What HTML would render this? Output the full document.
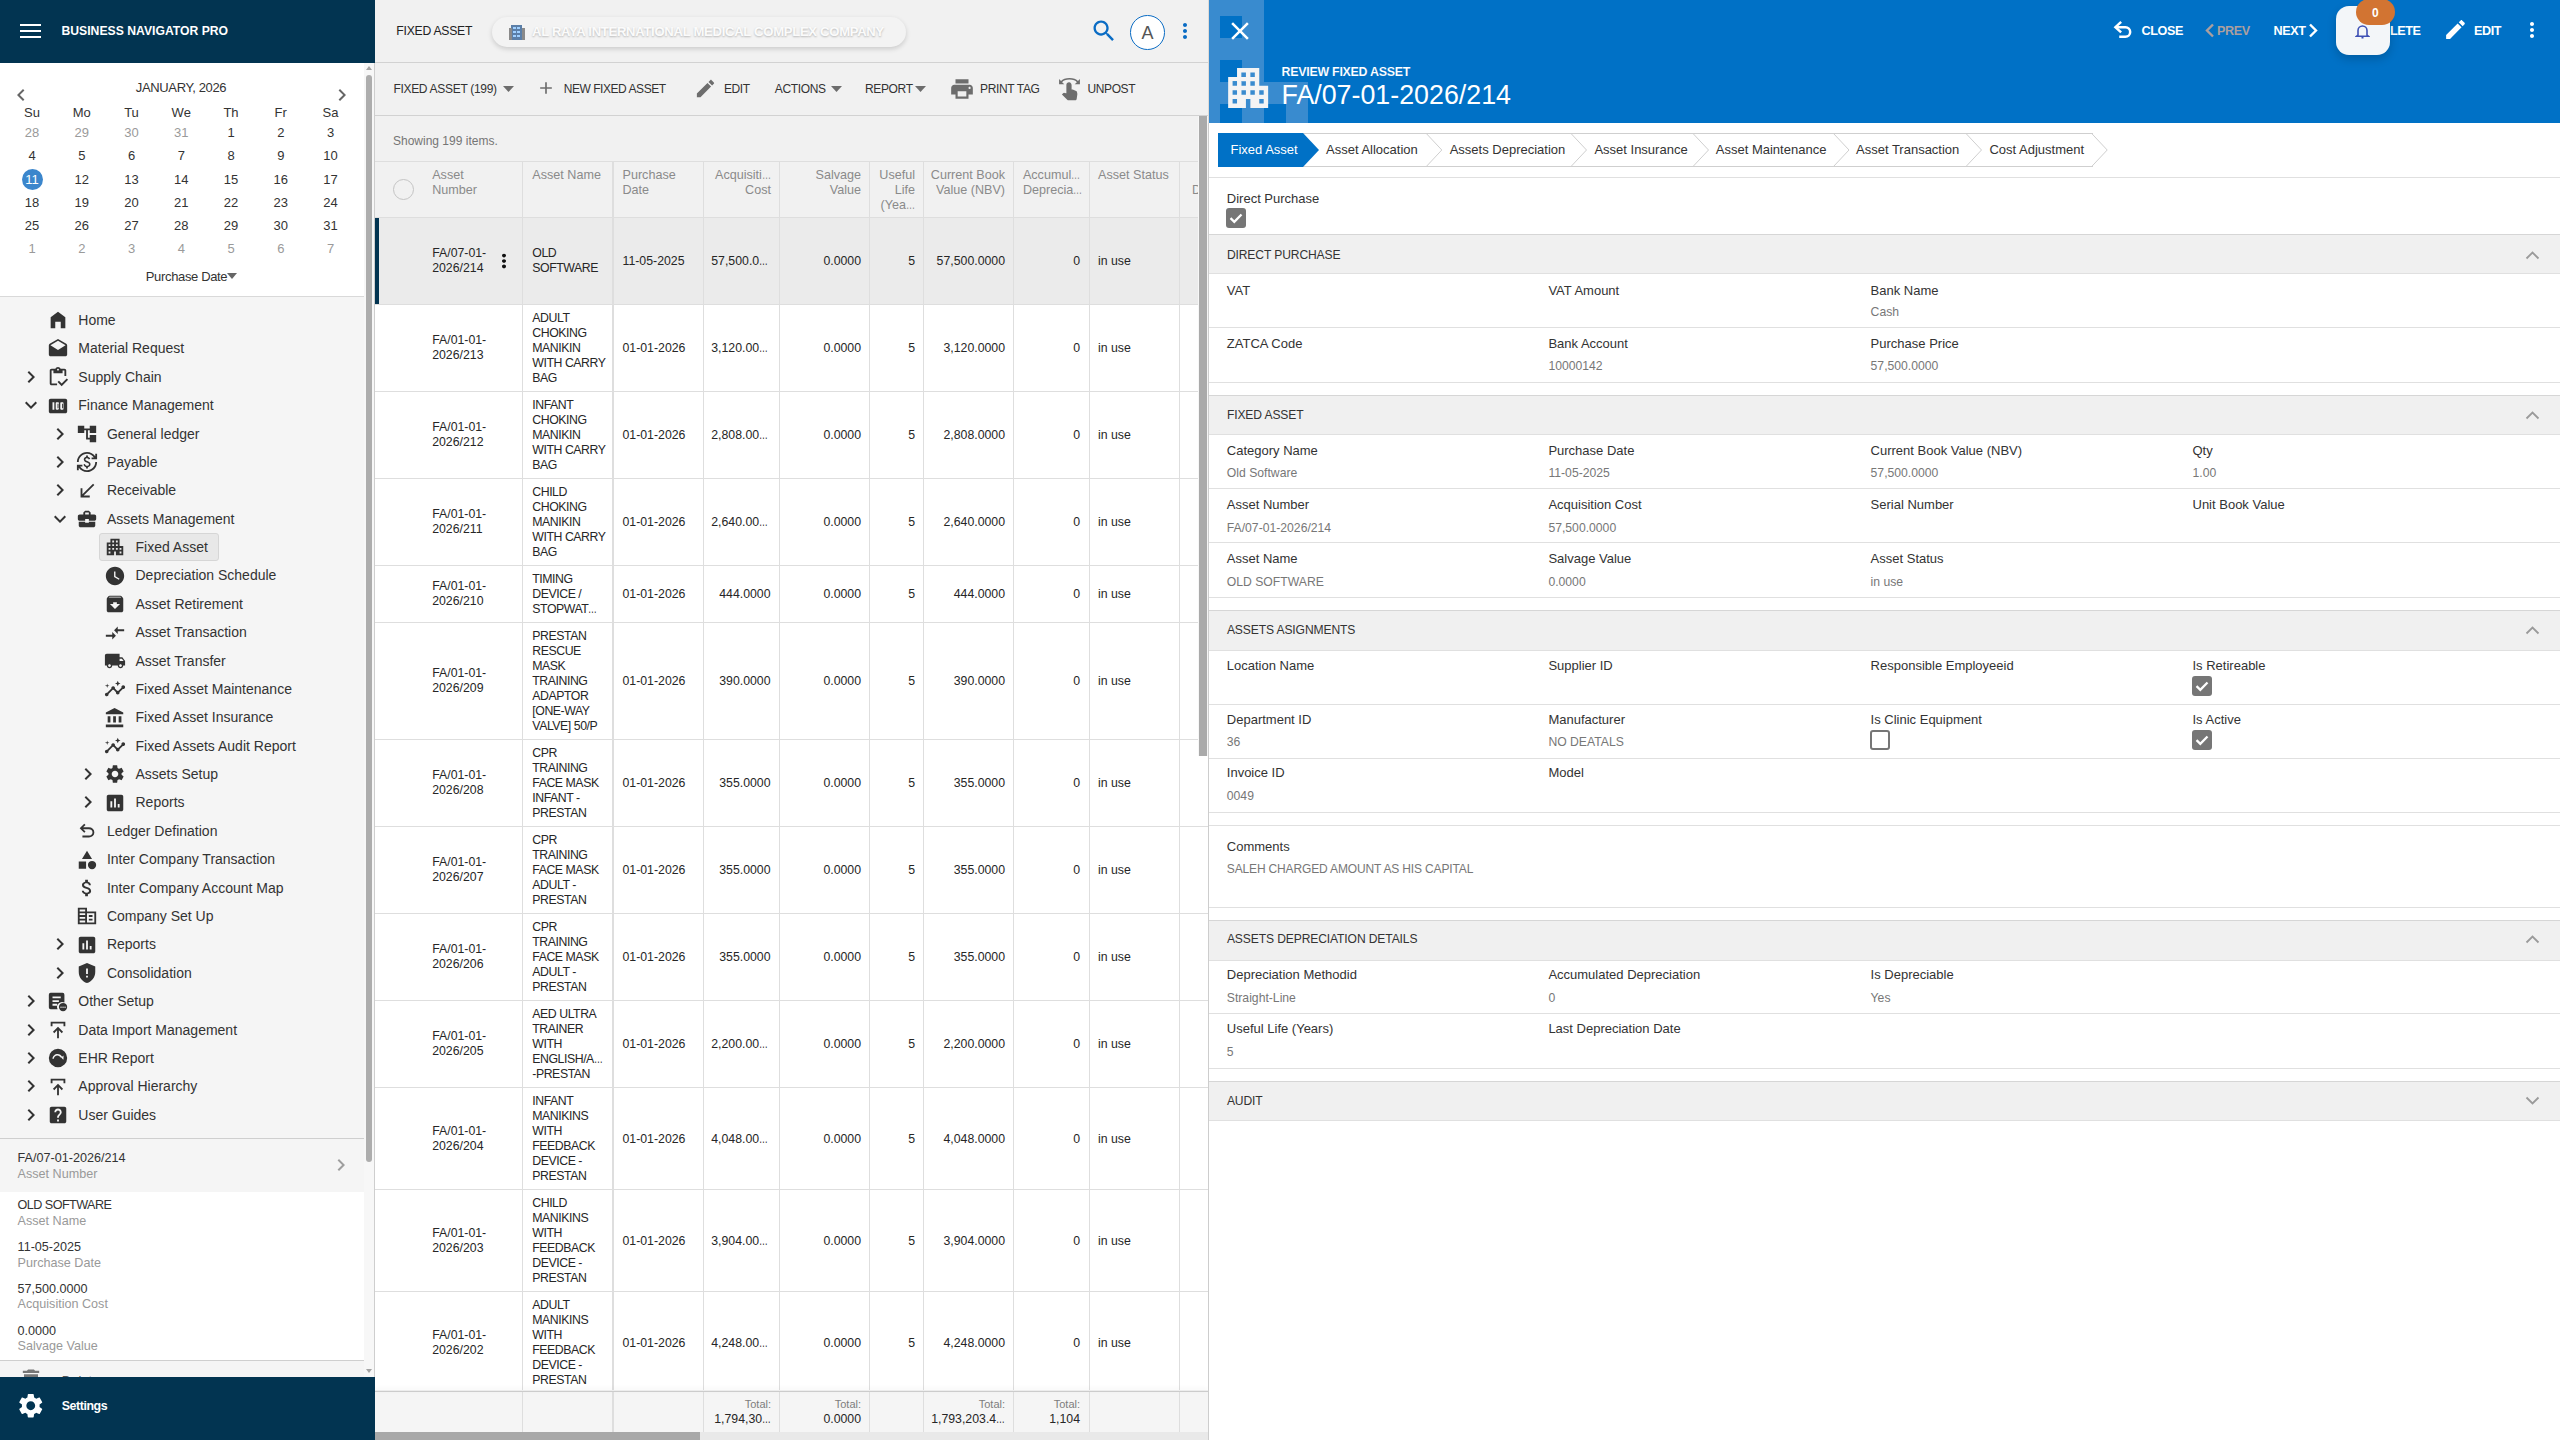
<!DOCTYPE html>
<html><head><meta charset="utf-8"><title>Fixed Asset</title>
<style>
html,body{margin:0;padding:0;}
body{width:2560px;height:1440px;overflow:hidden;position:relative;font-family:"Liberation Sans", sans-serif;background:#fff;}
.t{position:absolute;white-space:nowrap;}
.r{position:absolute;}
.i{position:absolute;display:block;}
.el{display:inline-block;transform:scaleX(0.72);transform-origin:0 50%;margin-right:-0.28em;}
</style></head><body>
<div class="r" style="left:0px;top:0px;width:375px;height:1440px;background:#f5f5f5;"></div>
<div class="r" style="left:0px;top:0px;width:375px;height:63px;background:#023451;"></div>
<div class="r" style="left:20px;top:24px;width:21px;height:2.3px;background:#fff"></div>
<div class="r" style="left:20px;top:30px;width:21px;height:2.3px;background:#fff"></div>
<div class="r" style="left:20px;top:35.6px;width:21px;height:2.3px;background:#fff"></div>
<div class="t" style="top:20.50px;font-size:12.2px;line-height:20px;color:#fff;font-weight:bold;left:61.50px;">BUSINESS NAVIGATOR PRO</div>
<div class="r" style="left:0px;top:63px;width:364px;height:233px;background:#fff;"></div>
<div class="r" style="left:0px;top:296px;width:364px;height:1px;background:#d9d9d9;"></div>
<div class="t" style="top:77.70px;font-size:13px;line-height:20px;color:#333;letter-spacing:-0.35px;left:81.00px;width:200px;text-align:center;">JANUARY, 2026</div>
<svg class="i" style="left:9px;top:83px;width:24px;height:24px;" viewBox="0 0 24 24"><path fill="#666" d="M15.41 7.41L14 6l-6 6 6 6 1.41-1.41L10.83 12z"/></svg>
<svg class="i" style="left:330px;top:83px;width:24px;height:24px;" viewBox="0 0 24 24"><path fill="#666" d="M10 6L8.59 7.41 13.17 12l-4.58 4.59L10 18l6-6z"/></svg>
<div class="t" style="top:102.50px;font-size:13px;line-height:20px;color:#333;left:12.00px;width:40px;text-align:center;">Su</div>
<div class="t" style="top:102.50px;font-size:13px;line-height:20px;color:#333;left:61.75px;width:40px;text-align:center;">Mo</div>
<div class="t" style="top:102.50px;font-size:13px;line-height:20px;color:#333;left:111.50px;width:40px;text-align:center;">Tu</div>
<div class="t" style="top:102.50px;font-size:13px;line-height:20px;color:#333;left:161.25px;width:40px;text-align:center;">We</div>
<div class="t" style="top:102.50px;font-size:13px;line-height:20px;color:#333;left:211.00px;width:40px;text-align:center;">Th</div>
<div class="t" style="top:102.50px;font-size:13px;line-height:20px;color:#333;left:260.75px;width:40px;text-align:center;">Fr</div>
<div class="t" style="top:102.50px;font-size:13px;line-height:20px;color:#333;left:310.50px;width:40px;text-align:center;">Sa</div>
<div class="t" style="top:122.50px;font-size:13px;line-height:20px;color:#9a9a9a;left:12.00px;width:40px;text-align:center;">28</div>
<div class="t" style="top:122.50px;font-size:13px;line-height:20px;color:#9a9a9a;left:61.75px;width:40px;text-align:center;">29</div>
<div class="t" style="top:122.50px;font-size:13px;line-height:20px;color:#9a9a9a;left:111.50px;width:40px;text-align:center;">30</div>
<div class="t" style="top:122.50px;font-size:13px;line-height:20px;color:#9a9a9a;left:161.25px;width:40px;text-align:center;">31</div>
<div class="t" style="top:122.50px;font-size:13px;line-height:20px;color:#333;left:211.00px;width:40px;text-align:center;">1</div>
<div class="t" style="top:122.50px;font-size:13px;line-height:20px;color:#333;left:260.75px;width:40px;text-align:center;">2</div>
<div class="t" style="top:122.50px;font-size:13px;line-height:20px;color:#333;left:310.50px;width:40px;text-align:center;">3</div>
<div class="t" style="top:146.40px;font-size:13px;line-height:20px;color:#333;left:12.00px;width:40px;text-align:center;">4</div>
<div class="t" style="top:146.40px;font-size:13px;line-height:20px;color:#333;left:61.75px;width:40px;text-align:center;">5</div>
<div class="t" style="top:146.40px;font-size:13px;line-height:20px;color:#333;left:111.50px;width:40px;text-align:center;">6</div>
<div class="t" style="top:146.40px;font-size:13px;line-height:20px;color:#333;left:161.25px;width:40px;text-align:center;">7</div>
<div class="t" style="top:146.40px;font-size:13px;line-height:20px;color:#333;left:211.00px;width:40px;text-align:center;">8</div>
<div class="t" style="top:146.40px;font-size:13px;line-height:20px;color:#333;left:260.75px;width:40px;text-align:center;">9</div>
<div class="t" style="top:146.40px;font-size:13px;line-height:20px;color:#333;left:310.50px;width:40px;text-align:center;">10</div>
<div class="r" style="left:21.5px;top:169.0px;width:21px;height:21px;border-radius:50%;background:#3b86cc"></div>
<div class="t" style="top:169.50px;font-size:13px;line-height:20px;color:#fff;left:12.00px;width:40px;text-align:center;">11</div>
<div class="t" style="top:169.50px;font-size:13px;line-height:20px;color:#333;left:61.75px;width:40px;text-align:center;">12</div>
<div class="t" style="top:169.50px;font-size:13px;line-height:20px;color:#333;left:111.50px;width:40px;text-align:center;">13</div>
<div class="t" style="top:169.50px;font-size:13px;line-height:20px;color:#333;left:161.25px;width:40px;text-align:center;">14</div>
<div class="t" style="top:169.50px;font-size:13px;line-height:20px;color:#333;left:211.00px;width:40px;text-align:center;">15</div>
<div class="t" style="top:169.50px;font-size:13px;line-height:20px;color:#333;left:260.75px;width:40px;text-align:center;">16</div>
<div class="t" style="top:169.50px;font-size:13px;line-height:20px;color:#333;left:310.50px;width:40px;text-align:center;">17</div>
<div class="t" style="top:192.60px;font-size:13px;line-height:20px;color:#333;left:12.00px;width:40px;text-align:center;">18</div>
<div class="t" style="top:192.60px;font-size:13px;line-height:20px;color:#333;left:61.75px;width:40px;text-align:center;">19</div>
<div class="t" style="top:192.60px;font-size:13px;line-height:20px;color:#333;left:111.50px;width:40px;text-align:center;">20</div>
<div class="t" style="top:192.60px;font-size:13px;line-height:20px;color:#333;left:161.25px;width:40px;text-align:center;">21</div>
<div class="t" style="top:192.60px;font-size:13px;line-height:20px;color:#333;left:211.00px;width:40px;text-align:center;">22</div>
<div class="t" style="top:192.60px;font-size:13px;line-height:20px;color:#333;left:260.75px;width:40px;text-align:center;">23</div>
<div class="t" style="top:192.60px;font-size:13px;line-height:20px;color:#333;left:310.50px;width:40px;text-align:center;">24</div>
<div class="t" style="top:216.30px;font-size:13px;line-height:20px;color:#333;left:12.00px;width:40px;text-align:center;">25</div>
<div class="t" style="top:216.30px;font-size:13px;line-height:20px;color:#333;left:61.75px;width:40px;text-align:center;">26</div>
<div class="t" style="top:216.30px;font-size:13px;line-height:20px;color:#333;left:111.50px;width:40px;text-align:center;">27</div>
<div class="t" style="top:216.30px;font-size:13px;line-height:20px;color:#333;left:161.25px;width:40px;text-align:center;">28</div>
<div class="t" style="top:216.30px;font-size:13px;line-height:20px;color:#333;left:211.00px;width:40px;text-align:center;">29</div>
<div class="t" style="top:216.30px;font-size:13px;line-height:20px;color:#333;left:260.75px;width:40px;text-align:center;">30</div>
<div class="t" style="top:216.30px;font-size:13px;line-height:20px;color:#333;left:310.50px;width:40px;text-align:center;">31</div>
<div class="t" style="top:239.40px;font-size:13px;line-height:20px;color:#9a9a9a;left:12.00px;width:40px;text-align:center;">1</div>
<div class="t" style="top:239.40px;font-size:13px;line-height:20px;color:#9a9a9a;left:61.75px;width:40px;text-align:center;">2</div>
<div class="t" style="top:239.40px;font-size:13px;line-height:20px;color:#9a9a9a;left:111.50px;width:40px;text-align:center;">3</div>
<div class="t" style="top:239.40px;font-size:13px;line-height:20px;color:#9a9a9a;left:161.25px;width:40px;text-align:center;">4</div>
<div class="t" style="top:239.40px;font-size:13px;line-height:20px;color:#9a9a9a;left:211.00px;width:40px;text-align:center;">5</div>
<div class="t" style="top:239.40px;font-size:13px;line-height:20px;color:#9a9a9a;left:260.75px;width:40px;text-align:center;">6</div>
<div class="t" style="top:239.40px;font-size:13px;line-height:20px;color:#9a9a9a;left:310.50px;width:40px;text-align:center;">7</div>
<div class="t" style="top:266.60px;font-size:13px;line-height:20px;color:#333;letter-spacing:-0.35px;left:145.80px;">Purchase Date</div>
<svg class="i" style="left:226.5px;top:273px;width:10px;height:6px;" viewBox="0 0 10 6"><path d="M0 0h10L5 6z" fill="#666"/></svg>
<svg class="i" style="left:47.0px;top:309.4px;width:22px;height:22px;" viewBox="0 0 24 24"><path fill="#333" d="M12 3L4 9v12h5v-7h6v7h5V9z"/></svg>
<div class="t" style="top:310.00px;font-size:14px;line-height:20px;color:#333;left:78.30px;">Home</div>
<svg class="i" style="left:47.0px;top:337.78px;width:22px;height:22px;" viewBox="0 0 24 24"><path fill="#333" d="M21.99 8c0-.72-.37-1.35-.94-1.7L12 1 2.95 6.3C2.38 6.65 2 7.28 2 8v10c0 1.1.9 2 2 2h16c1.1 0 2-.9 2-2l-.01-10zM12 13L3.74 7.84 12 3l8.26 4.84L12 13z"/></svg>
<div class="t" style="top:338.38px;font-size:14px;line-height:20px;color:#333;left:78.30px;">Material Request</div>
<svg class="i" style="left:19.0px;top:364.76px;width:24px;height:24px;" viewBox="0 0 24 24"><path fill="#333" d="M10 6L8.59 7.41 13.17 12l-4.58 4.59L10 18l6-6z"/></svg>
<svg class="i" style="left:47.0px;top:366.15999999999997px;width:22px;height:22px;" viewBox="0 0 24 24"><path fill="#333" d="M19 3h-4.18C14.4 1.84 13.3 1 12 1s-2.4.84-2.82 2H5c-1.1 0-2 .9-2 2v14c0 1.1.9 2 2 2h6v-2H5V5h2v3h10V5h2v6h2V5c0-1.1-.9-2-2-2zm-7 2c-.55 0-1-.45-1-1s.45-1 1-1 1 .45 1 1-.45 1-1 1zm9.5 8.5L16 19l-3-3-1.5 1.5L16 22l7-7z"/></svg>
<div class="t" style="top:366.76px;font-size:14px;line-height:20px;color:#333;left:78.30px;">Supply Chain</div>
<svg class="i" style="left:19.0px;top:393.14px;width:24px;height:24px;" viewBox="0 0 24 24"><path fill="#333" d="M16.59 8.59L12 13.17 7.41 8.59 6 10l6 6 6-6z"/></svg>
<svg class="i" style="left:47.0px;top:394.53999999999996px;width:22px;height:22px;" viewBox="0 0 24 24"><path fill="#333" d="M20 4H4c-1.11 0-2 .89-2 2v12c0 1.11.89 2 2 2h16c1.11 0 2-.89 2-2V6c0-1.11-.89-2-2-2zM8 16H6V8h2v8zm5-1c0 .55-.45 1-1 1h-1.5c-.55 0-1-.45-1-1V9c0-.55.45-1 1-1H12c.55 0 1 .45 1 1v6zm5 0c0 .55-.45 1-1 1h-1.5c-.55 0-1-.45-1-1V9c0-.55.45-1 1-1H17c.55 0 1 .45 1 1v6zm-6.5-5.5h1v5h-1zm5 0h1v5h-1z"/></svg>
<div class="t" style="top:395.14px;font-size:14px;line-height:20px;color:#333;left:78.30px;">Finance Management</div>
<svg class="i" style="left:47.6px;top:421.52px;width:24px;height:24px;" viewBox="0 0 24 24"><path fill="#333" d="M10 6L8.59 7.41 13.17 12l-4.58 4.59L10 18l6-6z"/></svg>
<svg class="i" style="left:75.6px;top:422.91999999999996px;width:22px;height:22px;" viewBox="0 0 24 24"><path fill="#333" d="M22 11V3h-7v3H9V3H2v8h7V8h2v10h4v3h7v-8h-7v3h-2V8h2v3z"/></svg>
<div class="t" style="top:423.52px;font-size:14px;line-height:20px;color:#333;left:106.90px;">General ledger</div>
<svg class="i" style="left:47.6px;top:449.9px;width:24px;height:24px;" viewBox="0 0 24 24"><path fill="#333" d="M10 6L8.59 7.41 13.17 12l-4.58 4.59L10 18l6-6z"/></svg>
<svg class="i" style="left:75.6px;top:451.29999999999995px;width:22px;height:22px;" viewBox="0 0 24 24"><path fill="#333" d="M12.89 11.1c-1.78-.59-2.64-.96-2.64-1.9 0-1.02 1.11-1.39 1.81-1.39 1.31 0 1.79.99 1.9 1.34l1.58-.67c-.15-.45-.82-1.92-2.54-2.24V5h-2v1.26c-2.48.56-2.49 2.86-2.49 2.96 0 2.27 2.25 2.91 3.35 3.31 1.58.56 2.28 1.07 2.28 2.03 0 1.13-1.05 1.61-1.98 1.61-1.82 0-2.34-1.87-2.4-2.09l-1.66.67c.63 2.19 2.28 2.78 2.9 2.96V19h2v-1.24c.4-.09 2.9-.59 2.9-3.22 0-1.39-.61-2.61-3.01-3.44zM3 21H1v-6h6v2H4.52c1.61 2.41 4.36 4 7.48 4 4.97 0 9-4.03 9-9h2c0 6.08-4.92 11-11 11-3.72 0-7.01-1.85-9-4.67V21zm-2-9C1 5.92 5.92 1 12 1c3.72 0 7.01 1.85 9 4.67V3h2v6h-6V7h2.48C17.87 4.59 15.12 3 12 3c-4.97 0-9 4.03-9 9H1z"/></svg>
<div class="t" style="top:451.90px;font-size:14px;line-height:20px;color:#333;left:106.90px;">Payable</div>
<svg class="i" style="left:47.6px;top:478.28px;width:24px;height:24px;" viewBox="0 0 24 24"><path fill="#333" d="M10 6L8.59 7.41 13.17 12l-4.58 4.59L10 18l6-6z"/></svg>
<svg class="i" style="left:75.6px;top:479.67999999999995px;width:22px;height:22px;" viewBox="0 0 24 24"><path fill="#333" d="M15 19v-2H8.41L20 5.41 18.59 4 7 15.59V9H5v10h10z"/></svg>
<div class="t" style="top:480.28px;font-size:14px;line-height:20px;color:#333;left:106.90px;">Receivable</div>
<svg class="i" style="left:47.6px;top:506.65999999999997px;width:24px;height:24px;" viewBox="0 0 24 24"><path fill="#333" d="M16.59 8.59L12 13.17 7.41 8.59 6 10l6 6 6-6z"/></svg>
<svg class="i" style="left:75.6px;top:508.05999999999995px;width:22px;height:22px;" viewBox="0 0 24 24"><path fill="#333" d="M10 16v-1H3.01L3 19c0 1.11.89 2 2 2h14c1.11 0 2-.89 2-2v-4h-7v1h-4zm10-9h-4.01V5l-2-2h-4l-2 2v2H4c-1.1 0-2 .9-2 2v3c0 1.11.89 2 2 2h6v-2h4v2h6c1.1 0 2-.9 2-2V9c0-1.1-.9-2-2-2zm-6 0h-4V5h4v2z"/></svg>
<div class="t" style="top:508.66px;font-size:14px;line-height:20px;color:#333;left:106.90px;">Assets Management</div>
<div class="r" style="left:99px;top:533px;width:120px;height:28px;background:#e8e8e8;border:1px solid #d6d6d6;border-radius:3px;box-sizing:border-box"></div>
<svg class="i" style="left:104.2px;top:536.4399999999999px;width:22px;height:22px;" viewBox="0 0 24 24"><path fill="#333" d="M17 11V3H7v4H3v14h8v-4h2v4h8V11h-4zM7 19H5v-2h2v2zm0-4H5v-2h2v2zm0-4H5V9h2v2zm4 4H9v-2h2v2zm0-4H9V9h2v2zm0-4H9V5h2v2zm4 8h-2v-2h2v2zm0-4h-2V9h2v2zm0-4h-2V5h2v2zm4 12h-2v-2h2v2zm0-4h-2v-2h2v2z"/></svg>
<div class="t" style="top:537.04px;font-size:14px;line-height:20px;color:#333;left:135.50px;">Fixed Asset</div>
<svg class="i" style="left:104.2px;top:564.8199999999999px;width:22px;height:22px;" viewBox="0 0 24 24"><path fill="#333" d="M12 2C6.5 2 2 6.5 2 12s4.5 10 10 10 10-4.5 10-10S17.5 2 12 2zm4.2 14.2L11 13V7h1.5v5.2l4.5 2.7-.8 1.3z"/></svg>
<div class="t" style="top:565.42px;font-size:14px;line-height:20px;color:#333;left:135.50px;">Depreciation Schedule</div>
<svg class="i" style="left:104.2px;top:593.1999999999999px;width:22px;height:22px;" viewBox="0 0 24 24"><path fill="#333" d="M20.54 5.23l-1.39-1.68C18.88 3.21 18.47 3 18 3H6c-.47 0-.88.21-1.16.55L3.46 5.23C3.17 5.57 3 6.02 3 6.5V19c0 1.1.9 2 2 2h14c1.1 0 2-.9 2-2V6.5c0-.48-.17-.93-.46-1.27zM12 17.5L6.5 12H10v-2h4v2h3.5L12 17.5zM5.12 5l.81-1h12l.94 1H5.12z"/></svg>
<div class="t" style="top:593.80px;font-size:14px;line-height:20px;color:#333;left:135.50px;">Asset Retirement</div>
<svg class="i" style="left:104.2px;top:621.58px;width:22px;height:22px;" viewBox="0 0 24 24"><path fill="#333" d="M9.01 14H2v2h7.01v3L13 15l-3.99-4v3zm5.98-1v-3H22V8h-7.01V5L11 9l3.99 4z"/></svg>
<div class="t" style="top:622.18px;font-size:14px;line-height:20px;color:#333;left:135.50px;">Asset Transaction</div>
<svg class="i" style="left:104.2px;top:649.9599999999999px;width:22px;height:22px;" viewBox="0 0 24 24"><path fill="#333" d="M20 8h-3V4H3c-1.1 0-2 .9-2 2v11h2c0 1.66 1.34 3 3 3s3-1.34 3-3h6c0 1.66 1.34 3 3 3s3-1.34 3-3h2v-5l-3-4zM6 18.5c-.83 0-1.5-.67-1.5-1.5s.67-1.5 1.5-1.5 1.5.67 1.5 1.5-.67 1.5-1.5 1.5zm13.5-9l1.96 2.5H17V9.5h2.5zm-1.5 9c-.83 0-1.5-.67-1.5-1.5s.67-1.5 1.5-1.5 1.5.67 1.5 1.5-.67 1.5-1.5 1.5z"/></svg>
<div class="t" style="top:650.56px;font-size:14px;line-height:20px;color:#333;left:135.50px;">Asset Transfer</div>
<svg class="i" style="left:104.2px;top:678.34px;width:22px;height:22px;" viewBox="0 0 24 24"><path fill="#333" d="M21 8c-1.45 0-2.26 1.44-1.93 2.51l-3.55 3.56c-.3-.09-.74-.09-1.04 0l-2.55-2.55C12.27 10.45 11.46 9 10 9c-1.45 0-2.27 1.44-1.93 2.52l-4.56 4.55C2.44 15.74 1 16.55 1 18c0 1.1.9 2 2 2 1.45 0 2.26-1.44 1.93-2.51l4.55-4.56c.3.09.74.09 1.04 0l2.55 2.55C12.73 16.55 13.54 18 15 18c1.45 0 2.27-1.44 1.93-2.52l3.56-3.55c1.07.33 2.51-.48 2.51-1.93 0-1.1-.9-2-2-2zM15 9l.94-2.07L18 6l-2.06-.93L15 3l-.92 2.07L12 6l2.08.93zM3.5 11L4 9l2-.5L4 8l-.5-2L3 8l-2 .5L3 9z"/></svg>
<div class="t" style="top:678.94px;font-size:14px;line-height:20px;color:#333;left:135.50px;">Fixed Asset Maintenance</div>
<svg class="i" style="left:104.2px;top:706.7199999999999px;width:22px;height:22px;" viewBox="0 0 24 24"><path fill="#333" d="M4 10v7h3v-7H4zm6 0v7h3v-7h-3zM2 22h19v-3H2v3zm14-12v7h3v-7h-3zm-4.5-9L2 6v2h19V6l-9.5-5z"/></svg>
<div class="t" style="top:707.32px;font-size:14px;line-height:20px;color:#333;left:135.50px;">Fixed Asset Insurance</div>
<svg class="i" style="left:104.2px;top:735.1px;width:22px;height:22px;" viewBox="0 0 24 24"><path fill="#333" d="M21 8c-1.45 0-2.26 1.44-1.93 2.51l-3.55 3.56c-.3-.09-.74-.09-1.04 0l-2.55-2.55C12.27 10.45 11.46 9 10 9c-1.45 0-2.27 1.44-1.93 2.52l-4.56 4.55C2.44 15.74 1 16.55 1 18c0 1.1.9 2 2 2 1.45 0 2.26-1.44 1.93-2.51l4.55-4.56c.3.09.74.09 1.04 0l2.55 2.55C12.73 16.55 13.54 18 15 18c1.45 0 2.27-1.44 1.93-2.52l3.56-3.55c1.07.33 2.51-.48 2.51-1.93 0-1.1-.9-2-2-2zM15 9l.94-2.07L18 6l-2.06-.93L15 3l-.92 2.07L12 6l2.08.93zM3.5 11L4 9l2-.5L4 8l-.5-2L3 8l-2 .5L3 9z"/></svg>
<div class="t" style="top:735.70px;font-size:14px;line-height:20px;color:#333;left:135.50px;">Fixed Assets Audit Report</div>
<svg class="i" style="left:76.2px;top:762.0799999999999px;width:24px;height:24px;" viewBox="0 0 24 24"><path fill="#333" d="M10 6L8.59 7.41 13.17 12l-4.58 4.59L10 18l6-6z"/></svg>
<svg class="i" style="left:104.2px;top:763.4799999999999px;width:22px;height:22px;" viewBox="0 0 24 24"><path fill="#333" d="M19.14 12.94c.04-.3.06-.61.06-.94 0-.32-.02-.64-.07-.94l2.03-1.58c.18-.14.23-.41.12-.61l-1.92-3.32c-.12-.22-.37-.29-.59-.22l-2.39.96c-.5-.38-1.03-.7-1.62-.94l-.36-2.54c-.04-.24-.24-.41-.48-.41h-3.84c-.24 0-.43.17-.47.41l-.36 2.54c-.59.24-1.13.57-1.62.94l-2.39-.96c-.22-.08-.47 0-.59.22L2.74 8.87c-.12.21-.08.47.12.61l2.03 1.58c-.05.3-.09.63-.09.94s.02.64.07.94l-2.03 1.58c-.18.14-.23.41-.12.61l1.92 3.32c.12.22.37.29.59.22l2.39-.96c.5.38 1.03.7 1.62.94l.36 2.54c.05.24.24.41.48.41h3.84c.24 0 .44-.17.47-.41l.36-2.54c.59-.24 1.13-.56 1.62-.94l2.39.96c.22.08.47 0 .59-.22l1.92-3.32c.12-.22.07-.47-.12-.61l-2.01-1.58zM12 15.6c-1.98 0-3.6-1.62-3.6-3.6s1.62-3.6 3.6-3.6 3.6 1.62 3.6 3.6-1.62 3.6-3.6 3.6z"/></svg>
<div class="t" style="top:764.08px;font-size:14px;line-height:20px;color:#333;left:135.50px;">Assets Setup</div>
<svg class="i" style="left:76.2px;top:790.46px;width:24px;height:24px;" viewBox="0 0 24 24"><path fill="#333" d="M10 6L8.59 7.41 13.17 12l-4.58 4.59L10 18l6-6z"/></svg>
<svg class="i" style="left:104.2px;top:791.86px;width:22px;height:22px;" viewBox="0 0 24 24"><path fill="#333" d="M19 3H5c-1.1 0-2 .9-2 2v14c0 1.1.9 2 2 2h14c1.1 0 2-.9 2-2V5c0-1.1-.9-2-2-2zM9 17H7v-7h2v7zm4 0h-2V7h2v10zm4 0h-2v-4h2v4z"/></svg>
<div class="t" style="top:792.46px;font-size:14px;line-height:20px;color:#333;left:135.50px;">Reports</div>
<svg class="i" style="left:75.6px;top:820.2399999999999px;width:22px;height:22px;" viewBox="0 0 24 24"><path fill="#333" d="M7 19v-2h7.1q1.575 0 2.738-1T18 13.5Q18 12 16.837 11T14.1 10H7.8l2.6 2.6L9 14 4 9l5-5 1.4 1.4L7.8 8h6.3q2.425 0 4.163 1.575T20 13.5q0 2.35-1.737 3.925T14.1 19z"/></svg>
<div class="t" style="top:820.84px;font-size:14px;line-height:20px;color:#333;left:106.90px;">Ledger Defination</div>
<svg class="i" style="left:75.6px;top:848.62px;width:22px;height:22px;" viewBox="0 0 24 24"><path fill="#333" d="M12 2l-5.5 9h11zM17.5 13a4.5 4.5 0 1 0 0 9 4.5 4.5 0 0 0 0-9zM3 13.5h8v8H3z"/></svg>
<div class="t" style="top:849.22px;font-size:14px;line-height:20px;color:#333;left:106.90px;">Inter Company Transaction</div>
<svg class="i" style="left:75.6px;top:877.0px;width:22px;height:22px;" viewBox="0 0 24 24"><path fill="#333" d="M11.8 10.9c-2.27-.59-3-1.2-3-2.15 0-1.09 1.01-1.85 2.7-1.85 1.78 0 2.44.85 2.5 2.1h2.21c-.07-1.72-1.12-3.3-3.21-3.81V3h-3v2.16c-1.94.42-3.5 1.68-3.5 3.61 0 2.31 1.91 3.46 4.7 4.13 2.5.6 3 1.48 3 2.41 0 .69-.49 1.79-2.7 1.79-2.06 0-2.87-.92-2.98-2.1h-2.2c.12 2.19 1.76 3.42 3.68 3.83V21h3v-2.15c1.95-.37 3.5-1.5 3.5-3.55 0-2.84-2.43-3.81-4.7-4.4z"/></svg>
<div class="t" style="top:877.60px;font-size:14px;line-height:20px;color:#333;left:106.90px;">Inter Company Account Map</div>
<svg class="i" style="left:75.6px;top:905.38px;width:22px;height:22px;" viewBox="0 0 24 24"><path fill="#333" d="M12 7V3H2v18h20V7H12zm-2 12H4v-2h6v2zm0-4H4v-2h6v2zm0-4H4V9h6v2zm0-4H4V5h6v2zm10 12h-8V9h8v10zm-2-8h-4v2h4v-2zm0 4h-4v2h4v-2z"/></svg>
<div class="t" style="top:905.98px;font-size:14px;line-height:20px;color:#333;left:106.90px;">Company Set Up</div>
<svg class="i" style="left:47.6px;top:932.36px;width:24px;height:24px;" viewBox="0 0 24 24"><path fill="#333" d="M10 6L8.59 7.41 13.17 12l-4.58 4.59L10 18l6-6z"/></svg>
<svg class="i" style="left:75.6px;top:933.76px;width:22px;height:22px;" viewBox="0 0 24 24"><path fill="#333" d="M19 3H5c-1.1 0-2 .9-2 2v14c0 1.1.9 2 2 2h14c1.1 0 2-.9 2-2V5c0-1.1-.9-2-2-2zM9 17H7v-7h2v7zm4 0h-2V7h2v10zm4 0h-2v-4h2v4z"/></svg>
<div class="t" style="top:934.36px;font-size:14px;line-height:20px;color:#333;left:106.90px;">Reports</div>
<svg class="i" style="left:47.6px;top:960.74px;width:24px;height:24px;" viewBox="0 0 24 24"><path fill="#333" d="M10 6L8.59 7.41 13.17 12l-4.58 4.59L10 18l6-6z"/></svg>
<svg class="i" style="left:75.6px;top:962.14px;width:22px;height:22px;" viewBox="0 0 24 24"><path fill="#333" d="M12 1L3 5v6c0 5.55 3.84 10.74 9 12 5.16-1.26 9-6.45 9-12V5l-9-4zm1 16h-2v-2h2v2zm0-4h-2V7h2v6z"/></svg>
<div class="t" style="top:962.74px;font-size:14px;line-height:20px;color:#333;left:106.90px;">Consolidation</div>
<svg class="i" style="left:19.0px;top:989.12px;width:24px;height:24px;" viewBox="0 0 24 24"><path fill="#333" d="M10 6L8.59 7.41 13.17 12l-4.58 4.59L10 18l6-6z"/></svg>
<svg class="i" style="left:47.0px;top:990.52px;width:22px;height:22px;" viewBox="0 0 24 24"><path fill="#333" d="M4 2h13a2 2 0 0 1 2 2v8.6a5.5 5.5 0 0 0-7.4 7.4H4a2 2 0 0 1-2-2V4a2 2 0 0 1 2-2zm2 4v2h9V6zm0 4v2h7v-2zm0 4v2h5v-2zM17.5 13a4.5 4.5 0 1 1 0 9 4.5 4.5 0 0 1 0-9zm-2.2 3.8a.8.8 0 1 0 0 1.6.8.8 0 0 0 0-1.6zm2.2 0a.8.8 0 1 0 0 1.6.8.8 0 0 0 0-1.6zm2.2 0a.8.8 0 1 0 0 1.6.8.8 0 0 0 0-1.6z"/></svg>
<div class="t" style="top:991.12px;font-size:14px;line-height:20px;color:#333;left:78.30px;">Other Setup</div>
<svg class="i" style="left:19.0px;top:1017.5px;width:24px;height:24px;" viewBox="0 0 24 24"><path fill="#333" d="M10 6L8.59 7.41 13.17 12l-4.58 4.59L10 18l6-6z"/></svg>
<svg class="i" style="left:47.0px;top:1018.9px;width:22px;height:22px;" viewBox="0 0 24 24"><path fill="#333" d="M4 3h16v5h-2V5H6v3H4zM12 8.5l-5.5 5.5 1.41 1.41L11 12.33V21h2v-8.67l3.09 3.08L17.5 14z"/></svg>
<div class="t" style="top:1019.50px;font-size:14px;line-height:20px;color:#333;left:78.30px;">Data Import Management</div>
<svg class="i" style="left:19.0px;top:1045.88px;width:24px;height:24px;" viewBox="0 0 24 24"><path fill="#333" d="M10 6L8.59 7.41 13.17 12l-4.58 4.59L10 18l6-6z"/></svg>
<svg class="i" style="left:47.0px;top:1047.2800000000002px;width:22px;height:22px;" viewBox="0 0 24 24"><path fill="#333" d="M12 2a10 10 0 1 0 0 20 10 10 0 0 0 0-20zm5.5 11.5l-2.5-2.6V12c-.5-1.6-2-2.7-3.7-2.7-2 0-3.7 1.5-3.9 3.5H5.9c.3-3 2.7-5.3 5.6-5.3 2.2 0 4.1 1.3 5 3.2l1.5-1.5V13.5z"/></svg>
<div class="t" style="top:1047.88px;font-size:14px;line-height:20px;color:#333;left:78.30px;">EHR Report</div>
<svg class="i" style="left:19.0px;top:1074.26px;width:24px;height:24px;" viewBox="0 0 24 24"><path fill="#333" d="M10 6L8.59 7.41 13.17 12l-4.58 4.59L10 18l6-6z"/></svg>
<svg class="i" style="left:47.0px;top:1075.66px;width:22px;height:22px;" viewBox="0 0 24 24"><path fill="#333" d="M4 3h16v5h-2V5H6v3H4zM12 8.5l-5.5 5.5 1.41 1.41L11 12.33V21h2v-8.67l3.09 3.08L17.5 14z"/></svg>
<div class="t" style="top:1076.26px;font-size:14px;line-height:20px;color:#333;left:78.30px;">Approval Hierarchy</div>
<svg class="i" style="left:19.0px;top:1102.6399999999999px;width:24px;height:24px;" viewBox="0 0 24 24"><path fill="#333" d="M10 6L8.59 7.41 13.17 12l-4.58 4.59L10 18l6-6z"/></svg>
<svg class="i" style="left:47.0px;top:1104.04px;width:22px;height:22px;" viewBox="0 0 24 24"><path fill="#333" d="M19 3H5c-1.1 0-2 .9-2 2v14c0 1.1.9 2 2 2h14c1.1 0 2-.9 2-2V5c0-1.1-.9-2-2-2zm-6 16h-2v-2h2v2zm1.7-7.2l-.9.9c-.7.7-.8 1.3-.8 2.3h-2v-.5c0-1.1.4-2 1.2-2.8l1.2-1.2c.4-.4.6-.9.6-1.5 0-1.1-.9-2-2-2s-2 .9-2 2H8c0-2.2 1.8-4 4-4s4 1.8 4 4c0 .9-.4 1.7-1.3 2.8z"/></svg>
<div class="t" style="top:1104.64px;font-size:14px;line-height:20px;color:#333;left:78.30px;">User Guides</div>
<div class="r" style="left:0px;top:1138px;width:364px;height:1px;background:#cfcfcf;"></div>
<div class="r" style="left:0px;top:1139px;width:364px;height:53px;background:#f5f5f5;"></div>
<div class="t" style="top:1147.80px;font-size:12.6px;line-height:20px;color:#333;left:17.60px;">FA/07-01-2026/214</div>
<div class="t" style="top:1163.60px;font-size:12.6px;line-height:20px;color:#999;left:17.60px;">Asset Number</div>
<svg class="i" style="left:329px;top:1153px;width:24px;height:24px;" viewBox="0 0 24 24"><path fill="#9e9e9e" d="M10 6L8.59 7.41 13.17 12l-4.58 4.59L10 18l6-6z"/></svg>
<div class="r" style="left:0px;top:1192px;width:364px;height:168px;background:#fff;"></div>
<div class="t" style="top:1194.80px;font-size:12.6px;line-height:20px;color:#333;letter-spacing:-0.55px;left:17.60px;">OLD SOFTWARE</div>
<div class="t" style="top:1210.60px;font-size:12.6px;line-height:20px;color:#999;left:17.60px;">Asset Name</div>
<div class="t" style="top:1236.80px;font-size:12.6px;line-height:20px;color:#333;letter-spacing:0px;left:17.60px;">11-05-2025</div>
<div class="t" style="top:1252.60px;font-size:12.6px;line-height:20px;color:#999;left:17.60px;">Purchase Date</div>
<div class="t" style="top:1278.60px;font-size:12.6px;line-height:20px;color:#333;letter-spacing:0px;left:17.60px;">57,500.0000</div>
<div class="t" style="top:1294.40px;font-size:12.6px;line-height:20px;color:#999;left:17.60px;">Acquisition Cost</div>
<div class="t" style="top:1320.50px;font-size:12.6px;line-height:20px;color:#333;letter-spacing:0px;left:17.60px;">0.0000</div>
<div class="t" style="top:1336.30px;font-size:12.6px;line-height:20px;color:#999;left:17.60px;">Salvage Value</div>
<div class="r" style="left:0px;top:1360px;width:364px;height:1px;background:#cfcfcf;"></div>
<svg class="i" style="left:16.7px;top:1365.5px;width:28px;height:28px;" viewBox="0 0 24 24"><path fill="#777" d="M6 19c0 1.1.9 2 2 2h8c1.1 0 2-.9 2-2V7H6v12zM19 4h-3.5l-1-1h-5l-1 1H5v2h14V4z"/></svg>
<div class="t" style="top:1371.00px;font-size:13px;line-height:20px;color:#555;left:61.80px;">Delete</div>
<div class="r" style="left:364px;top:63px;width:10px;height:1314px;background:#f7f7f7;"></div>
<div class="r" style="left:374px;top:63px;width:1px;height:1314px;background:#cecece;"></div>
<svg class="i" style="left:366px;top:66px;width:6px;height:4px;" viewBox="0 0 6 4"><path d="M0 4L3 0L6 4z" fill="#a3a3a3"/></svg>
<div class="r" style="left:366px;top:75px;width:6.1px;height:1087px;background:#adadad;border-radius:3px"></div>
<svg class="i" style="left:366px;top:1369px;width:6px;height:4px;" viewBox="0 0 6 4"><path d="M0 0L3 4L6 0z" fill="#a3a3a3"/></svg>
<div class="r" style="left:0px;top:1377px;width:375px;height:63px;background:#023451;"></div>
<svg class="i" style="left:16px;top:1391px;width:29.5px;height:29.5px;" viewBox="0 0 24 24"><path fill="#fff" d="M19.14 12.94c.04-.3.06-.61.06-.94 0-.32-.02-.64-.07-.94l2.03-1.58c.18-.14.23-.41.12-.61l-1.92-3.32c-.12-.22-.37-.29-.59-.22l-2.39.96c-.5-.38-1.03-.7-1.62-.94l-.36-2.54c-.04-.24-.24-.41-.48-.41h-3.84c-.24 0-.43.17-.47.41l-.36 2.54c-.59.24-1.13.57-1.62.94l-2.39-.96c-.22-.08-.47 0-.59.22L2.74 8.87c-.12.21-.08.47.12.61l2.03 1.58c-.05.3-.09.63-.09.94s.02.64.07.94l-2.03 1.58c-.18.14-.23.41-.12.61l1.92 3.32c.12.22.37.29.59.22l2.39-.96c.5.38 1.03.7 1.62.94l.36 2.54c.05.24.24.41.48.41h3.84c.24 0 .44-.17.47-.41l.36-2.54c.59-.24 1.13-.56 1.62-.94l2.39.96c.22.08.47 0 .59-.22l1.92-3.32c.12-.22.07-.47-.12-.61l-2.01-1.58zM12 15.6c-1.98 0-3.6-1.62-3.6-3.6s1.62-3.6 3.6-3.6 3.6 1.62 3.6 3.6-1.62 3.6-3.6 3.6z"/></svg>
<div class="t" style="top:1395.50px;font-size:12.4px;line-height:20px;color:#fff;font-weight:bold;letter-spacing:-0.45px;left:61.80px;">Settings</div>
<div class="r" style="left:375px;top:0px;width:833px;height:1440px;background:#f1f1f1;"></div>
<div class="r" style="left:375px;top:62px;width:833px;height:1px;background:#d2d2d2;"></div>
<div class="t" style="top:20.60px;font-size:12.2px;line-height:20px;color:#222;letter-spacing:-0.25px;left:396.30px;">FIXED ASSET</div>
<div class="r" style="left:492px;top:17px;width:414px;height:30px;border-radius:15px;background:#f3f3f3;box-shadow:0 2px 5px rgba(0,0,0,0.16)"></div>
<svg class="i" style="left:509px;top:24px;width:16px;height:17px;" viewBox="0 0 16 17"><rect x="2" y="1" width="11" height="15" fill="#5b7fa8"/><rect x="0" y="4" width="3" height="12" fill="#8a8a8a"/><rect x="13" y="4" width="3" height="12" fill="#8a8a8a"/><rect x="4" y="3" width="3" height="2" fill="#9fd0ff"/><rect x="8" y="3" width="3" height="2" fill="#9fd0ff"/><rect x="4" y="7" width="3" height="2" fill="#9fd0ff"/><rect x="8" y="7" width="3" height="2" fill="#9fd0ff"/><rect x="4" y="11" width="3" height="2" fill="#9fd0ff"/><rect x="8" y="11" width="3" height="2" fill="#9fd0ff"/></svg>
<div class="t" style="top:22.40px;font-size:13.1px;line-height:20px;color:#fbfbfb;font-weight:bold;letter-spacing:-0.3px;left:532.00px;text-shadow:0 1px 2px rgba(0,0,0,0.25);">AL RAYA INTERNATIONAL MEDICAL COMPLEX COMPANY</div>
<svg class="i" style="left:1090px;top:16.8px;width:28px;height:28px;" viewBox="0 0 24 24"><path fill="#0a6cc4" d="M15.5 14h-.79l-.28-.27C15.41 12.59 16 11.11 16 9.5 16 5.91 13.09 3 9.5 3S3 5.91 3 9.5 5.91 16 9.5 16c1.61 0 3.09-.59 4.23-1.57l.27.28v.79l5 4.99L20.49 19l-4.99-5zm-6 0C7.01 14 5 11.99 5 9.5S7.01 5 9.5 5 14 7.01 14 9.5 11.99 14 9.5 14z"/></svg>
<div class="r" style="left:1130px;top:15px;width:34.7px;height:34.7px;border-radius:50%;background:#fff;border:1.5px solid #0a6cc4;box-sizing:border-box"></div>
<div class="t" style="top:22.50px;font-size:18px;line-height:20px;color:#555;left:1132.40px;width:30px;text-align:center;">A</div>
<svg class="i" style="left:1173px;top:19px;width:24px;height:24px;" viewBox="0 0 24 24"><path fill="#0a6cc4" d="M12 8c1.1 0 2-.9 2-2s-.9-2-2-2-2 .9-2 2 .9 2 2 2zm0 2c-1.1 0-2 .9-2 2s.9 2 2 2 2-.9 2-2-.9-2-2-2zm0 6c-1.1 0-2 .9-2 2s.9 2 2 2 2-.9 2-2-.9-2-2-2z"/></svg>
<div class="r" style="left:375px;top:115px;width:833px;height:1px;background:#d2d2d2;"></div>
<div class="t" style="top:78.50px;font-size:12px;line-height:20px;color:#333;letter-spacing:-0.3px;left:393.40px;">FIXED ASSET (199)</div>
<svg class="i" style="left:503px;top:86px;width:11px;height:6px;" viewBox="0 0 11 6"><path d="M0 0h11L5.5 6z" fill="#6d6d6d"/></svg>
<svg class="i" style="left:536px;top:78px;width:20px;height:20px;" viewBox="0 0 24 24"><path fill="#6d6d6d" d="M19 13h-6v6h-2v-6H5v-2h6V5h2v6h6v2z"/></svg>
<div class="t" style="top:78.50px;font-size:12px;line-height:20px;color:#333;letter-spacing:-0.45px;left:563.70px;">NEW FIXED ASSET</div>
<svg class="i" style="left:694px;top:77px;width:23px;height:23px;" viewBox="0 0 24 24"><path fill="#6d6d6d" d="M3 17.25V21h3.75L17.81 9.94l-3.75-3.75L3 17.25zM20.71 7.04c.39-.39.39-1.02 0-1.41l-2.34-2.34c-.39-.39-1.02-.39-1.41 0l-1.83 1.83 3.75 3.75 1.83-1.83z"/></svg>
<div class="t" style="top:78.50px;font-size:12px;line-height:20px;color:#333;letter-spacing:-0.4px;left:724.00px;">EDIT</div>
<div class="t" style="top:78.50px;font-size:12px;line-height:20px;color:#333;letter-spacing:-0.35px;left:774.80px;">ACTIONS</div>
<svg class="i" style="left:831px;top:86px;width:11px;height:6px;" viewBox="0 0 11 6"><path d="M0 0h11L5.5 6z" fill="#6d6d6d"/></svg>
<div class="t" style="top:78.50px;font-size:12px;line-height:20px;color:#333;letter-spacing:-0.35px;left:865.00px;">REPORT</div>
<svg class="i" style="left:915px;top:86px;width:11px;height:6px;" viewBox="0 0 11 6"><path d="M0 0h11L5.5 6z" fill="#6d6d6d"/></svg>
<svg class="i" style="left:949px;top:76px;width:26px;height:26px;" viewBox="0 0 24 24"><path fill="#6d6d6d" d="M19 8H5c-1.66 0-3 1.34-3 3v6h4v4h12v-4h4v-6c0-1.66-1.34-3-3-3zm-3 11H8v-5h8v5zm3-7c-.55 0-1-.45-1-1s.45-1 1-1 1 .45 1 1-.45 1-1 1zm-1-9H6v4h12V3z"/></svg>
<div class="t" style="top:78.50px;font-size:12px;line-height:20px;color:#333;letter-spacing:-0.35px;left:980.00px;">PRINT TAG</div>
<svg class="i" style="left:1057px;top:77px;width:25px;height:25px;" viewBox="0 0 24 24"><path fill="#6d6d6d" d="M18.89 13.77l-3.8-1.67C14.96 12.04 14.81 12 14.65 12H14V7.63c0-1.32-.96-2.5-2.27-2.62C10.25 4.88 9 6.04 9 7.5v8.15l-1.79-.38c-.58-.12-1.16.1-1.55.52l-.95.96 5.09 5.08c.38.38.79.59 1.25.59h6.36c.75 0 1.38-.55 1.48-1.29l.64-4.47c.09-.7-.16-1.72-.64-2.89zM20.13 3.87C18.69 2.17 15.6 1 12 1S5.31 2.17 3.87 3.87L2 2v5h5L4.93 4.93c1-1.29 3.7-2.43 7.07-2.43s6.07 1.14 7.07 2.43L17 7h5V2z"/></svg>
<div class="t" style="top:78.50px;font-size:12px;line-height:20px;color:#333;letter-spacing:-0.4px;left:1087.50px;">UNPOST</div>
<div class="t" style="top:131.30px;font-size:12px;line-height:20px;color:#757575;left:393.00px;">Showing 199 items.</div>
<div class="r" style="left:375px;top:161px;width:833px;height:1px;background:#dedede;"></div>
<div class="r" style="left:375px;top:217px;width:833px;height:1px;background:#dedede;"></div>
<div class="r" style="left:393px;top:179px;width:21px;height:21px;border-radius:50%;border:1px solid #c4c4c4;box-sizing:border-box"></div>
<div class="t" style="top:167.80px;font-size:12.6px;line-height:15px;color:#8a8a8a;left:432.20px;">Asset</div>
<div class="t" style="top:183.10px;font-size:12.6px;line-height:15px;color:#8a8a8a;left:432.20px;">Number</div>
<div class="t" style="top:167.80px;font-size:12.6px;line-height:15px;color:#8a8a8a;left:532.30px;">Asset Name</div>
<div class="t" style="top:167.80px;font-size:12.6px;line-height:15px;color:#8a8a8a;left:622.50px;">Purchase</div>
<div class="t" style="top:183.10px;font-size:12.6px;line-height:15px;color:#8a8a8a;left:622.50px;">Date</div>
<div class="t" style="top:167.80px;font-size:12.6px;line-height:15px;color:#8a8a8a;left:651.00px;width:120px;text-align:right;">Acquisiti<span class="el">…</span></div>
<div class="t" style="top:183.10px;font-size:12.6px;line-height:15px;color:#8a8a8a;left:651.00px;width:120px;text-align:right;">Cost</div>
<div class="t" style="top:167.80px;font-size:12.6px;line-height:15px;color:#8a8a8a;left:741.00px;width:120px;text-align:right;">Salvage</div>
<div class="t" style="top:183.10px;font-size:12.6px;line-height:15px;color:#8a8a8a;left:741.00px;width:120px;text-align:right;">Value</div>
<div class="t" style="top:167.80px;font-size:12.6px;line-height:15px;color:#8a8a8a;left:795.00px;width:120px;text-align:right;">Useful</div>
<div class="t" style="top:183.10px;font-size:12.6px;line-height:15px;color:#8a8a8a;left:795.00px;width:120px;text-align:right;">Life</div>
<div class="t" style="top:198.40px;font-size:12.6px;line-height:15px;color:#8a8a8a;left:795.00px;width:120px;text-align:right;">(Yea<span class="el">…</span></div>
<div class="t" style="top:167.80px;font-size:12.6px;line-height:15px;color:#8a8a8a;left:885.00px;width:120px;text-align:right;">Current Book</div>
<div class="t" style="top:183.10px;font-size:12.6px;line-height:15px;color:#8a8a8a;left:885.00px;width:120px;text-align:right;">Value (NBV)</div>
<div class="t" style="top:167.80px;font-size:12.6px;line-height:15px;color:#8a8a8a;left:1022.90px;">Accumul<span class="el">…</span></div>
<div class="t" style="top:183.10px;font-size:12.6px;line-height:15px;color:#8a8a8a;left:1022.90px;">Deprecia<span class="el">…</span></div>
<div class="t" style="top:167.80px;font-size:12.6px;line-height:15px;color:#8a8a8a;left:1098.00px;">Asset Status</div>
<div class="t" style="top:167.80px;font-size:12.6px;line-height:15px;color:#8a8a8a;left:1192.00px;"></div>
<div class="t" style="top:183.10px;font-size:12.6px;line-height:15px;color:#8a8a8a;left:1192.00px;">D</div>
<div class="r" style="left:375px;top:218px;width:833px;height:1172px;overflow:hidden">
<div class="r" style="left:-375px;top:-218px;width:2560px;height:1440px">
<div class="r" style="left:375px;top:218px;width:833px;height:86px;background:#ebebeb;"></div>
<div class="r" style="left:375px;top:304px;width:833px;height:1px;background:#dedede;"></div>
<div class="t" style="top:246.30px;font-size:12.3px;line-height:15px;color:#262626;letter-spacing:0px;left:432.20px;">FA/07-01-</div>
<div class="t" style="top:261.30px;font-size:12.3px;line-height:15px;color:#262626;letter-spacing:0px;left:432.20px;">2026/214</div>
<div class="t" style="top:246.30px;font-size:12.3px;line-height:15px;color:#262626;letter-spacing:-0.45px;left:532.30px;">OLD</div>
<div class="t" style="top:261.30px;font-size:12.3px;line-height:15px;color:#262626;letter-spacing:-0.45px;left:532.30px;">SOFTWARE</div>
<div class="t" style="top:251.30px;font-size:12.3px;line-height:20px;color:#262626;left:622.50px;">11-05-2025</div>
<div class="t" style="top:251.30px;font-size:12.3px;line-height:20px;color:#262626;left:668.00px;width:100px;text-align:right;">57,500.0<span class="el">…</span></div>
<div class="t" style="top:251.30px;font-size:12.3px;line-height:20px;color:#262626;left:761.00px;width:100px;text-align:right;">0.0000</div>
<div class="t" style="top:251.30px;font-size:12.3px;line-height:20px;color:#262626;left:875.00px;width:40px;text-align:right;">5</div>
<div class="t" style="top:251.30px;font-size:12.3px;line-height:20px;color:#262626;left:905.00px;width:100px;text-align:right;">57,500.0000</div>
<div class="t" style="top:251.30px;font-size:12.3px;line-height:20px;color:#262626;left:1040.00px;width:40px;text-align:right;">0</div>
<div class="t" style="top:251.30px;font-size:12.3px;line-height:20px;color:#262626;left:1098.00px;">in use</div>
<div class="r" style="left:375px;top:218px;width:4px;height:86px;background:#023451;"></div>
<svg class="i" style="left:492px;top:249px;width:24px;height:24px;transform:scale(1,0.9);" viewBox="0 0 24 24"><path fill="#111" d="M12 8c1.1 0 2-.9 2-2s-.9-2-2-2-2 .9-2 2 .9 2 2 2zm0 2c-1.1 0-2 .9-2 2s.9 2 2 2 2-.9 2-2-.9-2-2-2zm0 6c-1.1 0-2 .9-2 2s.9 2 2 2 2-.9 2-2-.9-2-2-2z"/></svg>
<div class="r" style="left:375px;top:305px;width:833px;height:86px;background:#fff;"></div>
<div class="r" style="left:375px;top:391px;width:833px;height:1px;background:#dedede;"></div>
<div class="t" style="top:333.30px;font-size:12.3px;line-height:15px;color:#262626;letter-spacing:0px;left:432.20px;">FA/01-01-</div>
<div class="t" style="top:348.30px;font-size:12.3px;line-height:15px;color:#262626;letter-spacing:0px;left:432.20px;">2026/213</div>
<div class="t" style="top:310.80px;font-size:12.3px;line-height:15px;color:#262626;letter-spacing:-0.45px;left:532.30px;">ADULT</div>
<div class="t" style="top:325.80px;font-size:12.3px;line-height:15px;color:#262626;letter-spacing:-0.45px;left:532.30px;">CHOKING</div>
<div class="t" style="top:340.80px;font-size:12.3px;line-height:15px;color:#262626;letter-spacing:-0.45px;left:532.30px;">MANIKIN</div>
<div class="t" style="top:355.80px;font-size:12.3px;line-height:15px;color:#262626;letter-spacing:-0.45px;left:532.30px;">WITH CARRY</div>
<div class="t" style="top:370.80px;font-size:12.3px;line-height:15px;color:#262626;letter-spacing:-0.45px;left:532.30px;">BAG</div>
<div class="t" style="top:338.30px;font-size:12.3px;line-height:20px;color:#262626;left:622.50px;">01-01-2026</div>
<div class="t" style="top:338.30px;font-size:12.3px;line-height:20px;color:#262626;left:668.00px;width:100px;text-align:right;">3,120.00<span class="el">…</span></div>
<div class="t" style="top:338.30px;font-size:12.3px;line-height:20px;color:#262626;left:761.00px;width:100px;text-align:right;">0.0000</div>
<div class="t" style="top:338.30px;font-size:12.3px;line-height:20px;color:#262626;left:875.00px;width:40px;text-align:right;">5</div>
<div class="t" style="top:338.30px;font-size:12.3px;line-height:20px;color:#262626;left:905.00px;width:100px;text-align:right;">3,120.0000</div>
<div class="t" style="top:338.30px;font-size:12.3px;line-height:20px;color:#262626;left:1040.00px;width:40px;text-align:right;">0</div>
<div class="t" style="top:338.30px;font-size:12.3px;line-height:20px;color:#262626;left:1098.00px;">in use</div>
<div class="r" style="left:375px;top:392px;width:833px;height:86px;background:#fff;"></div>
<div class="r" style="left:375px;top:478px;width:833px;height:1px;background:#dedede;"></div>
<div class="t" style="top:420.30px;font-size:12.3px;line-height:15px;color:#262626;letter-spacing:0px;left:432.20px;">FA/01-01-</div>
<div class="t" style="top:435.30px;font-size:12.3px;line-height:15px;color:#262626;letter-spacing:0px;left:432.20px;">2026/212</div>
<div class="t" style="top:397.80px;font-size:12.3px;line-height:15px;color:#262626;letter-spacing:-0.45px;left:532.30px;">INFANT</div>
<div class="t" style="top:412.80px;font-size:12.3px;line-height:15px;color:#262626;letter-spacing:-0.45px;left:532.30px;">CHOKING</div>
<div class="t" style="top:427.80px;font-size:12.3px;line-height:15px;color:#262626;letter-spacing:-0.45px;left:532.30px;">MANIKIN</div>
<div class="t" style="top:442.80px;font-size:12.3px;line-height:15px;color:#262626;letter-spacing:-0.45px;left:532.30px;">WITH CARRY</div>
<div class="t" style="top:457.80px;font-size:12.3px;line-height:15px;color:#262626;letter-spacing:-0.45px;left:532.30px;">BAG</div>
<div class="t" style="top:425.30px;font-size:12.3px;line-height:20px;color:#262626;left:622.50px;">01-01-2026</div>
<div class="t" style="top:425.30px;font-size:12.3px;line-height:20px;color:#262626;left:668.00px;width:100px;text-align:right;">2,808.00<span class="el">…</span></div>
<div class="t" style="top:425.30px;font-size:12.3px;line-height:20px;color:#262626;left:761.00px;width:100px;text-align:right;">0.0000</div>
<div class="t" style="top:425.30px;font-size:12.3px;line-height:20px;color:#262626;left:875.00px;width:40px;text-align:right;">5</div>
<div class="t" style="top:425.30px;font-size:12.3px;line-height:20px;color:#262626;left:905.00px;width:100px;text-align:right;">2,808.0000</div>
<div class="t" style="top:425.30px;font-size:12.3px;line-height:20px;color:#262626;left:1040.00px;width:40px;text-align:right;">0</div>
<div class="t" style="top:425.30px;font-size:12.3px;line-height:20px;color:#262626;left:1098.00px;">in use</div>
<div class="r" style="left:375px;top:479px;width:833px;height:86px;background:#fff;"></div>
<div class="r" style="left:375px;top:565px;width:833px;height:1px;background:#dedede;"></div>
<div class="t" style="top:507.30px;font-size:12.3px;line-height:15px;color:#262626;letter-spacing:0px;left:432.20px;">FA/01-01-</div>
<div class="t" style="top:522.30px;font-size:12.3px;line-height:15px;color:#262626;letter-spacing:0px;left:432.20px;">2026/211</div>
<div class="t" style="top:484.80px;font-size:12.3px;line-height:15px;color:#262626;letter-spacing:-0.45px;left:532.30px;">CHILD</div>
<div class="t" style="top:499.80px;font-size:12.3px;line-height:15px;color:#262626;letter-spacing:-0.45px;left:532.30px;">CHOKING</div>
<div class="t" style="top:514.80px;font-size:12.3px;line-height:15px;color:#262626;letter-spacing:-0.45px;left:532.30px;">MANIKIN</div>
<div class="t" style="top:529.80px;font-size:12.3px;line-height:15px;color:#262626;letter-spacing:-0.45px;left:532.30px;">WITH CARRY</div>
<div class="t" style="top:544.80px;font-size:12.3px;line-height:15px;color:#262626;letter-spacing:-0.45px;left:532.30px;">BAG</div>
<div class="t" style="top:512.30px;font-size:12.3px;line-height:20px;color:#262626;left:622.50px;">01-01-2026</div>
<div class="t" style="top:512.30px;font-size:12.3px;line-height:20px;color:#262626;left:668.00px;width:100px;text-align:right;">2,640.00<span class="el">…</span></div>
<div class="t" style="top:512.30px;font-size:12.3px;line-height:20px;color:#262626;left:761.00px;width:100px;text-align:right;">0.0000</div>
<div class="t" style="top:512.30px;font-size:12.3px;line-height:20px;color:#262626;left:875.00px;width:40px;text-align:right;">5</div>
<div class="t" style="top:512.30px;font-size:12.3px;line-height:20px;color:#262626;left:905.00px;width:100px;text-align:right;">2,640.0000</div>
<div class="t" style="top:512.30px;font-size:12.3px;line-height:20px;color:#262626;left:1040.00px;width:40px;text-align:right;">0</div>
<div class="t" style="top:512.30px;font-size:12.3px;line-height:20px;color:#262626;left:1098.00px;">in use</div>
<div class="r" style="left:375px;top:566px;width:833px;height:56px;background:#fff;"></div>
<div class="r" style="left:375px;top:622px;width:833px;height:1px;background:#dedede;"></div>
<div class="t" style="top:579.30px;font-size:12.3px;line-height:15px;color:#262626;letter-spacing:0px;left:432.20px;">FA/01-01-</div>
<div class="t" style="top:594.30px;font-size:12.3px;line-height:15px;color:#262626;letter-spacing:0px;left:432.20px;">2026/210</div>
<div class="t" style="top:571.80px;font-size:12.3px;line-height:15px;color:#262626;letter-spacing:-0.45px;left:532.30px;">TIMING</div>
<div class="t" style="top:586.80px;font-size:12.3px;line-height:15px;color:#262626;letter-spacing:-0.45px;left:532.30px;">DEVICE /</div>
<div class="t" style="top:601.80px;font-size:12.3px;line-height:15px;color:#262626;letter-spacing:-0.45px;left:532.30px;">STOPWAT<span class="el">…</span></div>
<div class="t" style="top:584.30px;font-size:12.3px;line-height:20px;color:#262626;left:622.50px;">01-01-2026</div>
<div class="t" style="top:584.30px;font-size:12.3px;line-height:20px;color:#262626;left:670.50px;width:100px;text-align:right;">444.0000</div>
<div class="t" style="top:584.30px;font-size:12.3px;line-height:20px;color:#262626;left:761.00px;width:100px;text-align:right;">0.0000</div>
<div class="t" style="top:584.30px;font-size:12.3px;line-height:20px;color:#262626;left:875.00px;width:40px;text-align:right;">5</div>
<div class="t" style="top:584.30px;font-size:12.3px;line-height:20px;color:#262626;left:905.00px;width:100px;text-align:right;">444.0000</div>
<div class="t" style="top:584.30px;font-size:12.3px;line-height:20px;color:#262626;left:1040.00px;width:40px;text-align:right;">0</div>
<div class="t" style="top:584.30px;font-size:12.3px;line-height:20px;color:#262626;left:1098.00px;">in use</div>
<div class="r" style="left:375px;top:623px;width:833px;height:116px;background:#fff;"></div>
<div class="r" style="left:375px;top:739px;width:833px;height:1px;background:#dedede;"></div>
<div class="t" style="top:666.30px;font-size:12.3px;line-height:15px;color:#262626;letter-spacing:0px;left:432.20px;">FA/01-01-</div>
<div class="t" style="top:681.30px;font-size:12.3px;line-height:15px;color:#262626;letter-spacing:0px;left:432.20px;">2026/209</div>
<div class="t" style="top:628.80px;font-size:12.3px;line-height:15px;color:#262626;letter-spacing:-0.45px;left:532.30px;">PRESTAN</div>
<div class="t" style="top:643.80px;font-size:12.3px;line-height:15px;color:#262626;letter-spacing:-0.45px;left:532.30px;">RESCUE</div>
<div class="t" style="top:658.80px;font-size:12.3px;line-height:15px;color:#262626;letter-spacing:-0.45px;left:532.30px;">MASK</div>
<div class="t" style="top:673.80px;font-size:12.3px;line-height:15px;color:#262626;letter-spacing:-0.45px;left:532.30px;">TRAINING</div>
<div class="t" style="top:688.80px;font-size:12.3px;line-height:15px;color:#262626;letter-spacing:-0.45px;left:532.30px;">ADAPTOR</div>
<div class="t" style="top:703.80px;font-size:12.3px;line-height:15px;color:#262626;letter-spacing:-0.45px;left:532.30px;">[ONE-WAY</div>
<div class="t" style="top:718.80px;font-size:12.3px;line-height:15px;color:#262626;letter-spacing:-0.45px;left:532.30px;">VALVE] 50/P</div>
<div class="t" style="top:671.30px;font-size:12.3px;line-height:20px;color:#262626;left:622.50px;">01-01-2026</div>
<div class="t" style="top:671.30px;font-size:12.3px;line-height:20px;color:#262626;left:670.50px;width:100px;text-align:right;">390.0000</div>
<div class="t" style="top:671.30px;font-size:12.3px;line-height:20px;color:#262626;left:761.00px;width:100px;text-align:right;">0.0000</div>
<div class="t" style="top:671.30px;font-size:12.3px;line-height:20px;color:#262626;left:875.00px;width:40px;text-align:right;">5</div>
<div class="t" style="top:671.30px;font-size:12.3px;line-height:20px;color:#262626;left:905.00px;width:100px;text-align:right;">390.0000</div>
<div class="t" style="top:671.30px;font-size:12.3px;line-height:20px;color:#262626;left:1040.00px;width:40px;text-align:right;">0</div>
<div class="t" style="top:671.30px;font-size:12.3px;line-height:20px;color:#262626;left:1098.00px;">in use</div>
<div class="r" style="left:375px;top:740px;width:833px;height:86px;background:#fff;"></div>
<div class="r" style="left:375px;top:826px;width:833px;height:1px;background:#dedede;"></div>
<div class="t" style="top:768.30px;font-size:12.3px;line-height:15px;color:#262626;letter-spacing:0px;left:432.20px;">FA/01-01-</div>
<div class="t" style="top:783.30px;font-size:12.3px;line-height:15px;color:#262626;letter-spacing:0px;left:432.20px;">2026/208</div>
<div class="t" style="top:745.80px;font-size:12.3px;line-height:15px;color:#262626;letter-spacing:-0.45px;left:532.30px;">CPR</div>
<div class="t" style="top:760.80px;font-size:12.3px;line-height:15px;color:#262626;letter-spacing:-0.45px;left:532.30px;">TRAINING</div>
<div class="t" style="top:775.80px;font-size:12.3px;line-height:15px;color:#262626;letter-spacing:-0.45px;left:532.30px;">FACE MASK</div>
<div class="t" style="top:790.80px;font-size:12.3px;line-height:15px;color:#262626;letter-spacing:-0.45px;left:532.30px;">INFANT -</div>
<div class="t" style="top:805.80px;font-size:12.3px;line-height:15px;color:#262626;letter-spacing:-0.45px;left:532.30px;">PRESTAN</div>
<div class="t" style="top:773.30px;font-size:12.3px;line-height:20px;color:#262626;left:622.50px;">01-01-2026</div>
<div class="t" style="top:773.30px;font-size:12.3px;line-height:20px;color:#262626;left:670.50px;width:100px;text-align:right;">355.0000</div>
<div class="t" style="top:773.30px;font-size:12.3px;line-height:20px;color:#262626;left:761.00px;width:100px;text-align:right;">0.0000</div>
<div class="t" style="top:773.30px;font-size:12.3px;line-height:20px;color:#262626;left:875.00px;width:40px;text-align:right;">5</div>
<div class="t" style="top:773.30px;font-size:12.3px;line-height:20px;color:#262626;left:905.00px;width:100px;text-align:right;">355.0000</div>
<div class="t" style="top:773.30px;font-size:12.3px;line-height:20px;color:#262626;left:1040.00px;width:40px;text-align:right;">0</div>
<div class="t" style="top:773.30px;font-size:12.3px;line-height:20px;color:#262626;left:1098.00px;">in use</div>
<div class="r" style="left:375px;top:827px;width:833px;height:86px;background:#fff;"></div>
<div class="r" style="left:375px;top:913px;width:833px;height:1px;background:#dedede;"></div>
<div class="t" style="top:855.30px;font-size:12.3px;line-height:15px;color:#262626;letter-spacing:0px;left:432.20px;">FA/01-01-</div>
<div class="t" style="top:870.30px;font-size:12.3px;line-height:15px;color:#262626;letter-spacing:0px;left:432.20px;">2026/207</div>
<div class="t" style="top:832.80px;font-size:12.3px;line-height:15px;color:#262626;letter-spacing:-0.45px;left:532.30px;">CPR</div>
<div class="t" style="top:847.80px;font-size:12.3px;line-height:15px;color:#262626;letter-spacing:-0.45px;left:532.30px;">TRAINING</div>
<div class="t" style="top:862.80px;font-size:12.3px;line-height:15px;color:#262626;letter-spacing:-0.45px;left:532.30px;">FACE MASK</div>
<div class="t" style="top:877.80px;font-size:12.3px;line-height:15px;color:#262626;letter-spacing:-0.45px;left:532.30px;">ADULT -</div>
<div class="t" style="top:892.80px;font-size:12.3px;line-height:15px;color:#262626;letter-spacing:-0.45px;left:532.30px;">PRESTAN</div>
<div class="t" style="top:860.30px;font-size:12.3px;line-height:20px;color:#262626;left:622.50px;">01-01-2026</div>
<div class="t" style="top:860.30px;font-size:12.3px;line-height:20px;color:#262626;left:670.50px;width:100px;text-align:right;">355.0000</div>
<div class="t" style="top:860.30px;font-size:12.3px;line-height:20px;color:#262626;left:761.00px;width:100px;text-align:right;">0.0000</div>
<div class="t" style="top:860.30px;font-size:12.3px;line-height:20px;color:#262626;left:875.00px;width:40px;text-align:right;">5</div>
<div class="t" style="top:860.30px;font-size:12.3px;line-height:20px;color:#262626;left:905.00px;width:100px;text-align:right;">355.0000</div>
<div class="t" style="top:860.30px;font-size:12.3px;line-height:20px;color:#262626;left:1040.00px;width:40px;text-align:right;">0</div>
<div class="t" style="top:860.30px;font-size:12.3px;line-height:20px;color:#262626;left:1098.00px;">in use</div>
<div class="r" style="left:375px;top:914px;width:833px;height:86px;background:#fff;"></div>
<div class="r" style="left:375px;top:1000px;width:833px;height:1px;background:#dedede;"></div>
<div class="t" style="top:942.30px;font-size:12.3px;line-height:15px;color:#262626;letter-spacing:0px;left:432.20px;">FA/01-01-</div>
<div class="t" style="top:957.30px;font-size:12.3px;line-height:15px;color:#262626;letter-spacing:0px;left:432.20px;">2026/206</div>
<div class="t" style="top:919.80px;font-size:12.3px;line-height:15px;color:#262626;letter-spacing:-0.45px;left:532.30px;">CPR</div>
<div class="t" style="top:934.80px;font-size:12.3px;line-height:15px;color:#262626;letter-spacing:-0.45px;left:532.30px;">TRAINING</div>
<div class="t" style="top:949.80px;font-size:12.3px;line-height:15px;color:#262626;letter-spacing:-0.45px;left:532.30px;">FACE MASK</div>
<div class="t" style="top:964.80px;font-size:12.3px;line-height:15px;color:#262626;letter-spacing:-0.45px;left:532.30px;">ADULT -</div>
<div class="t" style="top:979.80px;font-size:12.3px;line-height:15px;color:#262626;letter-spacing:-0.45px;left:532.30px;">PRESTAN</div>
<div class="t" style="top:947.30px;font-size:12.3px;line-height:20px;color:#262626;left:622.50px;">01-01-2026</div>
<div class="t" style="top:947.30px;font-size:12.3px;line-height:20px;color:#262626;left:670.50px;width:100px;text-align:right;">355.0000</div>
<div class="t" style="top:947.30px;font-size:12.3px;line-height:20px;color:#262626;left:761.00px;width:100px;text-align:right;">0.0000</div>
<div class="t" style="top:947.30px;font-size:12.3px;line-height:20px;color:#262626;left:875.00px;width:40px;text-align:right;">5</div>
<div class="t" style="top:947.30px;font-size:12.3px;line-height:20px;color:#262626;left:905.00px;width:100px;text-align:right;">355.0000</div>
<div class="t" style="top:947.30px;font-size:12.3px;line-height:20px;color:#262626;left:1040.00px;width:40px;text-align:right;">0</div>
<div class="t" style="top:947.30px;font-size:12.3px;line-height:20px;color:#262626;left:1098.00px;">in use</div>
<div class="r" style="left:375px;top:1001px;width:833px;height:86px;background:#fff;"></div>
<div class="r" style="left:375px;top:1087px;width:833px;height:1px;background:#dedede;"></div>
<div class="t" style="top:1029.30px;font-size:12.3px;line-height:15px;color:#262626;letter-spacing:0px;left:432.20px;">FA/01-01-</div>
<div class="t" style="top:1044.30px;font-size:12.3px;line-height:15px;color:#262626;letter-spacing:0px;left:432.20px;">2026/205</div>
<div class="t" style="top:1006.80px;font-size:12.3px;line-height:15px;color:#262626;letter-spacing:-0.45px;left:532.30px;">AED ULTRA</div>
<div class="t" style="top:1021.80px;font-size:12.3px;line-height:15px;color:#262626;letter-spacing:-0.45px;left:532.30px;">TRAINER</div>
<div class="t" style="top:1036.80px;font-size:12.3px;line-height:15px;color:#262626;letter-spacing:-0.45px;left:532.30px;">WITH</div>
<div class="t" style="top:1051.80px;font-size:12.3px;line-height:15px;color:#262626;letter-spacing:-0.45px;left:532.30px;">ENGLISH/A<span class="el">…</span></div>
<div class="t" style="top:1066.80px;font-size:12.3px;line-height:15px;color:#262626;letter-spacing:-0.45px;left:532.30px;">-PRESTAN</div>
<div class="t" style="top:1034.30px;font-size:12.3px;line-height:20px;color:#262626;left:622.50px;">01-01-2026</div>
<div class="t" style="top:1034.30px;font-size:12.3px;line-height:20px;color:#262626;left:668.00px;width:100px;text-align:right;">2,200.00<span class="el">…</span></div>
<div class="t" style="top:1034.30px;font-size:12.3px;line-height:20px;color:#262626;left:761.00px;width:100px;text-align:right;">0.0000</div>
<div class="t" style="top:1034.30px;font-size:12.3px;line-height:20px;color:#262626;left:875.00px;width:40px;text-align:right;">5</div>
<div class="t" style="top:1034.30px;font-size:12.3px;line-height:20px;color:#262626;left:905.00px;width:100px;text-align:right;">2,200.0000</div>
<div class="t" style="top:1034.30px;font-size:12.3px;line-height:20px;color:#262626;left:1040.00px;width:40px;text-align:right;">0</div>
<div class="t" style="top:1034.30px;font-size:12.3px;line-height:20px;color:#262626;left:1098.00px;">in use</div>
<div class="r" style="left:375px;top:1088px;width:833px;height:101px;background:#fff;"></div>
<div class="r" style="left:375px;top:1189px;width:833px;height:1px;background:#dedede;"></div>
<div class="t" style="top:1123.80px;font-size:12.3px;line-height:15px;color:#262626;letter-spacing:0px;left:432.20px;">FA/01-01-</div>
<div class="t" style="top:1138.80px;font-size:12.3px;line-height:15px;color:#262626;letter-spacing:0px;left:432.20px;">2026/204</div>
<div class="t" style="top:1093.80px;font-size:12.3px;line-height:15px;color:#262626;letter-spacing:-0.45px;left:532.30px;">INFANT</div>
<div class="t" style="top:1108.80px;font-size:12.3px;line-height:15px;color:#262626;letter-spacing:-0.45px;left:532.30px;">MANIKINS</div>
<div class="t" style="top:1123.80px;font-size:12.3px;line-height:15px;color:#262626;letter-spacing:-0.45px;left:532.30px;">WITH</div>
<div class="t" style="top:1138.80px;font-size:12.3px;line-height:15px;color:#262626;letter-spacing:-0.45px;left:532.30px;">FEEDBACK</div>
<div class="t" style="top:1153.80px;font-size:12.3px;line-height:15px;color:#262626;letter-spacing:-0.45px;left:532.30px;">DEVICE -</div>
<div class="t" style="top:1168.80px;font-size:12.3px;line-height:15px;color:#262626;letter-spacing:-0.45px;left:532.30px;">PRESTAN</div>
<div class="t" style="top:1128.80px;font-size:12.3px;line-height:20px;color:#262626;left:622.50px;">01-01-2026</div>
<div class="t" style="top:1128.80px;font-size:12.3px;line-height:20px;color:#262626;left:668.00px;width:100px;text-align:right;">4,048.00<span class="el">…</span></div>
<div class="t" style="top:1128.80px;font-size:12.3px;line-height:20px;color:#262626;left:761.00px;width:100px;text-align:right;">0.0000</div>
<div class="t" style="top:1128.80px;font-size:12.3px;line-height:20px;color:#262626;left:875.00px;width:40px;text-align:right;">5</div>
<div class="t" style="top:1128.80px;font-size:12.3px;line-height:20px;color:#262626;left:905.00px;width:100px;text-align:right;">4,048.0000</div>
<div class="t" style="top:1128.80px;font-size:12.3px;line-height:20px;color:#262626;left:1040.00px;width:40px;text-align:right;">0</div>
<div class="t" style="top:1128.80px;font-size:12.3px;line-height:20px;color:#262626;left:1098.00px;">in use</div>
<div class="r" style="left:375px;top:1190px;width:833px;height:101px;background:#fff;"></div>
<div class="r" style="left:375px;top:1291px;width:833px;height:1px;background:#dedede;"></div>
<div class="t" style="top:1225.80px;font-size:12.3px;line-height:15px;color:#262626;letter-spacing:0px;left:432.20px;">FA/01-01-</div>
<div class="t" style="top:1240.80px;font-size:12.3px;line-height:15px;color:#262626;letter-spacing:0px;left:432.20px;">2026/203</div>
<div class="t" style="top:1195.80px;font-size:12.3px;line-height:15px;color:#262626;letter-spacing:-0.45px;left:532.30px;">CHILD</div>
<div class="t" style="top:1210.80px;font-size:12.3px;line-height:15px;color:#262626;letter-spacing:-0.45px;left:532.30px;">MANIKINS</div>
<div class="t" style="top:1225.80px;font-size:12.3px;line-height:15px;color:#262626;letter-spacing:-0.45px;left:532.30px;">WITH</div>
<div class="t" style="top:1240.80px;font-size:12.3px;line-height:15px;color:#262626;letter-spacing:-0.45px;left:532.30px;">FEEDBACK</div>
<div class="t" style="top:1255.80px;font-size:12.3px;line-height:15px;color:#262626;letter-spacing:-0.45px;left:532.30px;">DEVICE -</div>
<div class="t" style="top:1270.80px;font-size:12.3px;line-height:15px;color:#262626;letter-spacing:-0.45px;left:532.30px;">PRESTAN</div>
<div class="t" style="top:1230.80px;font-size:12.3px;line-height:20px;color:#262626;left:622.50px;">01-01-2026</div>
<div class="t" style="top:1230.80px;font-size:12.3px;line-height:20px;color:#262626;left:668.00px;width:100px;text-align:right;">3,904.00<span class="el">…</span></div>
<div class="t" style="top:1230.80px;font-size:12.3px;line-height:20px;color:#262626;left:761.00px;width:100px;text-align:right;">0.0000</div>
<div class="t" style="top:1230.80px;font-size:12.3px;line-height:20px;color:#262626;left:875.00px;width:40px;text-align:right;">5</div>
<div class="t" style="top:1230.80px;font-size:12.3px;line-height:20px;color:#262626;left:905.00px;width:100px;text-align:right;">3,904.0000</div>
<div class="t" style="top:1230.80px;font-size:12.3px;line-height:20px;color:#262626;left:1040.00px;width:40px;text-align:right;">0</div>
<div class="t" style="top:1230.80px;font-size:12.3px;line-height:20px;color:#262626;left:1098.00px;">in use</div>
<div class="r" style="left:375px;top:1292px;width:833px;height:101px;background:#fff;"></div>
<div class="r" style="left:375px;top:1393px;width:833px;height:1px;background:#dedede;"></div>
<div class="t" style="top:1327.80px;font-size:12.3px;line-height:15px;color:#262626;letter-spacing:0px;left:432.20px;">FA/01-01-</div>
<div class="t" style="top:1342.80px;font-size:12.3px;line-height:15px;color:#262626;letter-spacing:0px;left:432.20px;">2026/202</div>
<div class="t" style="top:1297.80px;font-size:12.3px;line-height:15px;color:#262626;letter-spacing:-0.45px;left:532.30px;">ADULT</div>
<div class="t" style="top:1312.80px;font-size:12.3px;line-height:15px;color:#262626;letter-spacing:-0.45px;left:532.30px;">MANIKINS</div>
<div class="t" style="top:1327.80px;font-size:12.3px;line-height:15px;color:#262626;letter-spacing:-0.45px;left:532.30px;">WITH</div>
<div class="t" style="top:1342.80px;font-size:12.3px;line-height:15px;color:#262626;letter-spacing:-0.45px;left:532.30px;">FEEDBACK</div>
<div class="t" style="top:1357.80px;font-size:12.3px;line-height:15px;color:#262626;letter-spacing:-0.45px;left:532.30px;">DEVICE -</div>
<div class="t" style="top:1372.80px;font-size:12.3px;line-height:15px;color:#262626;letter-spacing:-0.45px;left:532.30px;">PRESTAN</div>
<div class="t" style="top:1332.80px;font-size:12.3px;line-height:20px;color:#262626;left:622.50px;">01-01-2026</div>
<div class="t" style="top:1332.80px;font-size:12.3px;line-height:20px;color:#262626;left:668.00px;width:100px;text-align:right;">4,248.00<span class="el">…</span></div>
<div class="t" style="top:1332.80px;font-size:12.3px;line-height:20px;color:#262626;left:761.00px;width:100px;text-align:right;">0.0000</div>
<div class="t" style="top:1332.80px;font-size:12.3px;line-height:20px;color:#262626;left:875.00px;width:40px;text-align:right;">5</div>
<div class="t" style="top:1332.80px;font-size:12.3px;line-height:20px;color:#262626;left:905.00px;width:100px;text-align:right;">4,248.0000</div>
<div class="t" style="top:1332.80px;font-size:12.3px;line-height:20px;color:#262626;left:1040.00px;width:40px;text-align:right;">0</div>
<div class="t" style="top:1332.80px;font-size:12.3px;line-height:20px;color:#262626;left:1098.00px;">in use</div>
<div class="r" style="left:522px;top:218px;width:1px;height:1172px;background:#dedede;"></div>
<div class="r" style="left:612px;top:218px;width:2px;height:1172px;background:#dedede;"></div>
<div class="r" style="left:703px;top:218px;width:1px;height:1172px;background:#dedede;"></div>
<div class="r" style="left:779px;top:218px;width:1px;height:1172px;background:#dedede;"></div>
<div class="r" style="left:869px;top:218px;width:1px;height:1172px;background:#dedede;"></div>
<div class="r" style="left:923px;top:218px;width:1px;height:1172px;background:#dedede;"></div>
<div class="r" style="left:1013px;top:218px;width:1px;height:1172px;background:#dedede;"></div>
<div class="r" style="left:1089px;top:218px;width:1px;height:1172px;background:#dedede;"></div>
<div class="r" style="left:1179px;top:218px;width:1px;height:1172px;background:#dedede;"></div>
</div></div>
<div class="r" style="left:522px;top:162px;width:1px;height:55px;background:#dedede;"></div>
<div class="r" style="left:612px;top:162px;width:2px;height:55px;background:#dedede;"></div>
<div class="r" style="left:703px;top:162px;width:1px;height:55px;background:#dedede;"></div>
<div class="r" style="left:779px;top:162px;width:1px;height:55px;background:#dedede;"></div>
<div class="r" style="left:869px;top:162px;width:1px;height:55px;background:#dedede;"></div>
<div class="r" style="left:923px;top:162px;width:1px;height:55px;background:#dedede;"></div>
<div class="r" style="left:1013px;top:162px;width:1px;height:55px;background:#dedede;"></div>
<div class="r" style="left:1089px;top:162px;width:1px;height:55px;background:#dedede;"></div>
<div class="r" style="left:1179px;top:162px;width:1px;height:55px;background:#dedede;"></div>
<div class="r" style="left:375px;top:1391px;width:833px;height:41px;background:#f5f5f5;"></div>
<div class="r" style="left:375px;top:1391px;width:833px;height:1px;background:#cccccc;box-shadow:0 -2px 4px rgba(0,0,0,0.10);"></div>
<div class="r" style="left:522px;top:1392px;width:1px;height:40px;background:#dedede;"></div>
<div class="r" style="left:612px;top:1392px;width:2px;height:40px;background:#dedede;"></div>
<div class="r" style="left:703px;top:1392px;width:1px;height:40px;background:#dedede;"></div>
<div class="r" style="left:779px;top:1392px;width:1px;height:40px;background:#dedede;"></div>
<div class="r" style="left:869px;top:1392px;width:1px;height:40px;background:#dedede;"></div>
<div class="r" style="left:923px;top:1392px;width:1px;height:40px;background:#dedede;"></div>
<div class="r" style="left:1013px;top:1392px;width:1px;height:40px;background:#dedede;"></div>
<div class="r" style="left:1089px;top:1392px;width:1px;height:40px;background:#dedede;"></div>
<div class="r" style="left:1179px;top:1392px;width:1px;height:40px;background:#dedede;"></div>
<div class="t" style="top:1394.00px;font-size:11px;line-height:20px;color:#7d7d7d;left:671.00px;width:100px;text-align:right;">Total:</div>
<div class="t" style="top:1408.50px;font-size:12.3px;line-height:20px;color:#262626;left:671.00px;width:100px;text-align:right;">1,794,30<span class="el">…</span></div>
<div class="t" style="top:1394.00px;font-size:11px;line-height:20px;color:#7d7d7d;left:761.00px;width:100px;text-align:right;">Total:</div>
<div class="t" style="top:1408.50px;font-size:12.3px;line-height:20px;color:#262626;left:761.00px;width:100px;text-align:right;">0.0000</div>
<div class="t" style="top:1394.00px;font-size:11px;line-height:20px;color:#7d7d7d;left:905.00px;width:100px;text-align:right;">Total:</div>
<div class="t" style="top:1408.50px;font-size:12.3px;line-height:20px;color:#262626;left:905.00px;width:100px;text-align:right;">1,793,203.4<span class="el">…</span></div>
<div class="t" style="top:1394.00px;font-size:11px;line-height:20px;color:#7d7d7d;left:980.00px;width:100px;text-align:right;">Total:</div>
<div class="t" style="top:1408.50px;font-size:12.3px;line-height:20px;color:#262626;left:980.00px;width:100px;text-align:right;">1,104</div>
<div class="r" style="left:375px;top:1432px;width:833px;height:8px;background:#e9e9e9;"></div>
<div class="r" style="left:375px;top:1432px;width:325px;height:8px;background:#a8a8a8;"></div>
<div class="r" style="left:1197.7px;top:116px;width:1.3px;height:640px;background:#f7f7f7;"></div>
<div class="r" style="left:1199px;top:116px;width:8px;height:640px;background:#aaaaaa;"></div>
<div class="r" style="left:1207px;top:116px;width:1px;height:640px;background:#f5f5f5;"></div>
<div class="r" style="left:1208px;top:0px;width:1px;height:123px;background:#dedad6;"></div>
<div class="r" style="left:1208px;top:123px;width:1px;height:1317px;background:#cdcdcd;"></div>
<div class="r" style="left:1209px;top:0px;width:1351px;height:1440px;background:#fff;"></div>
<div class="r" style="left:1209px;top:0px;width:1351px;height:123px;background:#0071c6;"></div>
<div class="r" style="left:1209px;top:0px;width:55px;height:123px;background:#398bcf;"></div>
<div class="r" style="left:1220px;top:16px;width:22px;height:22px;background:#0071c6;"></div>
<div class="r" style="left:1220px;top:60px;width:22px;height:22px;background:#0071c6;"></div>
<div class="r" style="left:1220px;top:104px;width:22px;height:19px;background:#0071c6;"></div>
<div class="r" style="left:1264px;top:82px;width:44px;height:22px;background:#398bcf;"></div>
<div class="r" style="left:1286px;top:104px;width:22px;height:19px;background:#398bcf;"></div>
<svg class="i" style="left:1225px;top:16px;width:30px;height:30px;" viewBox="0 0 24 24"><path fill="#fff" d="M19 6.41L17.59 5 12 10.59 6.41 5 5 6.41 10.59 12 5 17.59 6.41 19 12 13.41 17.59 19 19 17.59 13.41 12z"/></svg>
<svg class="i" style="left:1228.3px;top:68.4px;width:40.3px;height:40px;" viewBox="3 3 18 18"><path fill="#f4f4f4" d="M17 11V3H7v4H3v14h8v-4h2v4h8V11h-4zM7 19H5v-2h2v2zm0-4H5v-2h2v2zm0-4H5V9h2v2zm4 4H9v-2h2v2zm0-4H9V9h2v2zm0-4H9V5h2v2zm4 8h-2v-2h2v2zm0-4h-2V9h2v2zm0-4h-2V5h2v2zm4 12h-2v-2h2v2zm0-4h-2v-2h2v2z"/></svg>
<div class="t" style="top:62.20px;font-size:12.4px;line-height:20px;color:#fff;font-weight:bold;letter-spacing:-0.25px;left:1281.50px;-webkit-text-stroke:0.1px #0071c6;">REVIEW FIXED ASSET</div>
<div class="t" style="top:85.20px;font-size:26.8px;line-height:20px;color:#fff;letter-spacing:0px;left:1281.50px;">FA/07-01-2026/214</div>
<svg class="i" style="left:2113px;top:20px;width:22px;height:20px;" viewBox="0 0 22 21"><path d="M8 2L2 7.5L8 13" fill="none" stroke="#fff" stroke-width="2.6"/><path d="M3 7.5h9.5a5 5 0 0 1 0 10H6" fill="none" stroke="#fff" stroke-width="2.6"/></svg>
<div class="t" style="top:20.50px;font-size:12.6px;line-height:20px;color:#fff;font-weight:bold;letter-spacing:-0.4px;left:2141.60px;">CLOSE</div>
<svg class="i" style="left:2205px;top:23px;width:10px;height:15px;" viewBox="0 0 10 15"><path d="M8 1.5L2 7.5l6 6" fill="none" stroke="#ab9f9f" stroke-width="2.4"/></svg>
<div class="t" style="top:20.50px;font-size:12.6px;line-height:20px;color:#ab9f9f;font-weight:bold;letter-spacing:-0.4px;left:2217.00px;">PREV</div>
<div class="t" style="top:20.50px;font-size:12.6px;line-height:20px;color:#fff;font-weight:bold;letter-spacing:-0.4px;left:2273.60px;">NEXT</div>
<svg class="i" style="left:2308px;top:23px;width:10px;height:15px;" viewBox="0 0 10 15"><path d="M2 1.5l6 6-6 6" fill="none" stroke="#fff" stroke-width="2.4"/></svg>
<div class="t" style="top:20.50px;font-size:12.6px;line-height:20px;color:#fff;font-weight:bold;letter-spacing:-0.4px;left:2390.00px;">LETE</div>
<div class="r" style="left:2336px;top:6px;width:53.5px;height:48.5px;border-radius:13px;background:#f3f6f9;box-shadow:0 4px 10px rgba(0,0,0,0.18)"></div>
<svg class="i" style="left:2355px;top:23px;width:15px;height:16px;" viewBox="0 0 15 16"><path d="M3 12V7.5a4.5 4.5 0 0 1 9 0V12l1.5 1.3H1.5z" fill="none" stroke="#3f51b5" stroke-width="1.6"/><rect x="6.5" y="13.5" width="2" height="2" fill="#3f51b5"/></svg>
<div class="r" style="left:2356px;top:-1px;width:39px;height:26px;border-radius:13px;background:#d27432"></div>
<div class="t" style="top:2.50px;font-size:12px;line-height:20px;color:#fff;font-weight:bold;left:2365.30px;width:20px;text-align:center;">0</div>
<svg class="i" style="left:2443px;top:17px;width:25px;height:25px;" viewBox="0 0 24 24"><path fill="#fff" d="M3 17.25V21h3.75L17.81 9.94l-3.75-3.75L3 17.25zM20.71 7.04c.39-.39.39-1.02 0-1.41l-2.34-2.34c-.39-.39-1.02-.39-1.41 0l-1.83 1.83 3.75 3.75 1.83-1.83z"/></svg>
<div class="t" style="top:20.50px;font-size:12.6px;line-height:20px;color:#fff;font-weight:bold;letter-spacing:-0.4px;left:2474.00px;">EDIT</div>
<svg class="i" style="left:2520px;top:18px;width:24px;height:24px;" viewBox="0 0 24 24"><path fill="#fff" d="M12 8c1.1 0 2-.9 2-2s-.9-2-2-2-2 .9-2 2 .9 2 2 2zm0 2c-1.1 0-2 .9-2 2s.9 2 2 2 2-.9 2-2-.9-2-2-2zm0 6c-1.1 0-2 .9-2 2s.9 2 2 2 2-.9 2-2-.9-2-2-2z"/></svg>
<div class="r" style="left:1209px;top:176.6px;width:1351px;height:1px;background:#e0e0e0;"></div>
<svg class="i" style="left:1209px;top:132.8px;width:900px;height:34px;" viewBox="0 0 900 34"><path d="M94 0.5H884" stroke="#cfcfcf" stroke-width="1"/><path d="M94 33.5H884" stroke="#cfcfcf" stroke-width="1"/><path d="M217.3 0.5L232.8 17L217.3 33.5" fill="none" stroke="#cfcfcf" stroke-width="1"/><path d="M362.0 0.5L377.5 17L362.0 33.5" fill="none" stroke="#cfcfcf" stroke-width="1"/><path d="M484.0 0.5L499.5 17L484.0 33.5" fill="none" stroke="#cfcfcf" stroke-width="1"/><path d="M624.5 0.5L640.0 17L624.5 33.5" fill="none" stroke="#cfcfcf" stroke-width="1"/><path d="M757.0 0.5L772.5 17L757.0 33.5" fill="none" stroke="#cfcfcf" stroke-width="1"/><path d="M882.7 0.5L898.2 17L882.7 33.5" fill="none" stroke="#cfcfcf" stroke-width="1"/><path d="M9 0H94L110 17L94 34H9z" fill="#0071c6"/></svg>
<div class="t" style="top:139.60px;font-size:13px;line-height:20px;color:#fff;left:1230.50px;">Fixed Asset</div>
<div class="t" style="top:139.60px;font-size:13px;line-height:20px;color:#333;left:1326.00px;">Asset Allocation</div>
<div class="t" style="top:139.60px;font-size:13px;line-height:20px;color:#333;left:1449.70px;">Assets Depreciation</div>
<div class="t" style="top:139.60px;font-size:13px;line-height:20px;color:#333;left:1594.40px;">Asset Insurance</div>
<div class="t" style="top:139.60px;font-size:13px;line-height:20px;color:#333;left:1715.80px;">Asset Maintenance</div>
<div class="t" style="top:139.60px;font-size:13px;line-height:20px;color:#333;left:1856.00px;">Asset Transaction</div>
<div class="t" style="top:139.60px;font-size:13px;line-height:20px;color:#333;left:1989.40px;">Cost Adjustment</div>
<div class="t" style="top:188.60px;font-size:13px;line-height:20px;color:#333;left:1226.80px;">Direct Purchase</div>
<div class="r" style="left:1226px;top:208px;width:20px;height:20px;border-radius:3px;background:#767676"></div><svg class="i" style="left:1226px;top:208px;width:20px;height:20px;" viewBox="0 0 20 20"><path d="M4.5 10.2L8.3 13.8L15.5 6.5" fill="none" stroke="#fff" stroke-width="2.3"/></svg>
<div class="r" style="left:1209px;top:234px;width:1351px;height:2px;background:#d6d6d6;"></div>
<div class="r" style="left:1209px;top:234px;width:1351px;height:39px;background:#f0f0f0;"></div>
<div class="r" style="left:1209px;top:234px;width:1351px;height:1px;background:#d6d6d6;"></div>
<div class="r" style="left:1209px;top:273px;width:1351px;height:1px;background:#e0e0e0;"></div>
<div class="t" style="top:244.50px;font-size:12.1px;line-height:20px;color:#333;letter-spacing:-0.12px;left:1226.90px;">DIRECT PURCHASE</div>
<svg class="i" style="left:2525px;top:249.5px;width:15px;height:10px;" viewBox="0 0 15 10"><path d="M1.5 8.5L7.5 2.5L13.5 8.5" fill="none" stroke="#9a9a9a" stroke-width="1.8"/></svg>
<div class="t" style="top:280.60px;font-size:13px;line-height:20px;color:#333;left:1226.80px;">VAT</div>
<div class="t" style="top:280.60px;font-size:13px;line-height:20px;color:#333;left:1548.40px;">VAT Amount</div>
<div class="t" style="top:280.60px;font-size:13px;line-height:20px;color:#333;left:1870.60px;">Bank Name</div>
<div class="t" style="top:302.20px;font-size:12.2px;line-height:20px;color:#777;left:1870.60px;">Cash</div>
<div class="r" style="left:1209px;top:327px;width:1351px;height:1px;background:#e0e0e0;"></div>
<div class="t" style="top:334.40px;font-size:13px;line-height:20px;color:#333;left:1226.80px;">ZATCA Code</div>
<div class="t" style="top:334.40px;font-size:13px;line-height:20px;color:#333;left:1548.40px;">Bank Account</div>
<div class="t" style="top:356.40px;font-size:12.2px;line-height:20px;color:#777;left:1548.40px;">10000142</div>
<div class="t" style="top:334.40px;font-size:13px;line-height:20px;color:#333;left:1870.60px;">Purchase Price</div>
<div class="t" style="top:356.40px;font-size:12.2px;line-height:20px;color:#777;left:1870.60px;">57,500.0000</div>
<div class="r" style="left:1209px;top:382px;width:1351px;height:1px;background:#e0e0e0;"></div>
<div class="r" style="left:1209px;top:395px;width:1351px;height:39px;background:#f0f0f0;"></div>
<div class="r" style="left:1209px;top:395px;width:1351px;height:1px;background:#d6d6d6;"></div>
<div class="r" style="left:1209px;top:434px;width:1351px;height:1px;background:#e0e0e0;"></div>
<div class="t" style="top:404.60px;font-size:12.1px;line-height:20px;color:#333;letter-spacing:-0.12px;left:1226.90px;">FIXED ASSET</div>
<svg class="i" style="left:2525px;top:409.6px;width:15px;height:10px;" viewBox="0 0 15 10"><path d="M1.5 8.5L7.5 2.5L13.5 8.5" fill="none" stroke="#9a9a9a" stroke-width="1.8"/></svg>
<div class="t" style="top:440.60px;font-size:13px;line-height:20px;color:#333;left:1226.80px;">Category Name</div>
<div class="t" style="top:463.10px;font-size:12.2px;line-height:20px;color:#777;left:1226.80px;">Old Software</div>
<div class="t" style="top:440.60px;font-size:13px;line-height:20px;color:#333;left:1548.40px;">Purchase Date</div>
<div class="t" style="top:463.10px;font-size:12.2px;line-height:20px;color:#777;left:1548.40px;">11-05-2025</div>
<div class="t" style="top:440.60px;font-size:13px;line-height:20px;color:#333;left:1870.60px;">Current Book Value (NBV)</div>
<div class="t" style="top:463.10px;font-size:12.2px;line-height:20px;color:#777;left:1870.60px;">57,500.0000</div>
<div class="t" style="top:440.60px;font-size:13px;line-height:20px;color:#333;left:2192.50px;">Qty</div>
<div class="t" style="top:463.10px;font-size:12.2px;line-height:20px;color:#777;left:2192.50px;">1.00</div>
<div class="r" style="left:1209px;top:488px;width:1351px;height:1px;background:#e0e0e0;"></div>
<div class="t" style="top:494.60px;font-size:13px;line-height:20px;color:#333;left:1226.80px;">Asset Number</div>
<div class="t" style="top:517.70px;font-size:12.2px;line-height:20px;color:#777;left:1226.80px;">FA/07-01-2026/214</div>
<div class="t" style="top:494.60px;font-size:13px;line-height:20px;color:#333;left:1548.40px;">Acquisition Cost</div>
<div class="t" style="top:517.70px;font-size:12.2px;line-height:20px;color:#777;left:1548.40px;">57,500.0000</div>
<div class="t" style="top:494.60px;font-size:13px;line-height:20px;color:#333;left:1870.60px;">Serial Number</div>
<div class="t" style="top:494.60px;font-size:13px;line-height:20px;color:#333;left:2192.50px;">Unit Book Value</div>
<div class="r" style="left:1209px;top:542px;width:1351px;height:1px;background:#e0e0e0;"></div>
<div class="t" style="top:548.60px;font-size:13px;line-height:20px;color:#333;left:1226.80px;">Asset Name</div>
<div class="t" style="top:571.70px;font-size:12.2px;line-height:20px;color:#777;left:1226.80px;">OLD SOFTWARE</div>
<div class="t" style="top:548.60px;font-size:13px;line-height:20px;color:#333;left:1548.40px;">Salvage Value</div>
<div class="t" style="top:571.70px;font-size:12.2px;line-height:20px;color:#777;left:1548.40px;">0.0000</div>
<div class="t" style="top:548.60px;font-size:13px;line-height:20px;color:#333;left:1870.60px;">Asset Status</div>
<div class="t" style="top:571.70px;font-size:12.2px;line-height:20px;color:#777;left:1870.60px;">in use</div>
<div class="r" style="left:1209px;top:597px;width:1351px;height:1px;background:#e0e0e0;"></div>
<div class="r" style="left:1209px;top:610px;width:1351px;height:39.5px;background:#f0f0f0;"></div>
<div class="r" style="left:1209px;top:610px;width:1351px;height:1px;background:#d6d6d6;"></div>
<div class="r" style="left:1209px;top:649.5px;width:1351px;height:1px;background:#e0e0e0;"></div>
<div class="t" style="top:619.50px;font-size:12.1px;line-height:20px;color:#333;letter-spacing:-0.12px;left:1226.90px;">ASSETS ASIGNMENTS</div>
<svg class="i" style="left:2525px;top:624.5px;width:15px;height:10px;" viewBox="0 0 15 10"><path d="M1.5 8.5L7.5 2.5L13.5 8.5" fill="none" stroke="#9a9a9a" stroke-width="1.8"/></svg>
<div class="t" style="top:655.50px;font-size:13px;line-height:20px;color:#333;left:1226.80px;">Location Name</div>
<div class="t" style="top:655.50px;font-size:13px;line-height:20px;color:#333;left:1548.40px;">Supplier ID</div>
<div class="t" style="top:655.50px;font-size:13px;line-height:20px;color:#333;left:1870.60px;">Responsible Employeeid</div>
<div class="t" style="top:655.50px;font-size:13px;line-height:20px;color:#333;left:2192.50px;">Is Retireable</div>
<div class="r" style="left:2191.8px;top:676.1px;width:20px;height:20px;border-radius:3px;background:#767676"></div><svg class="i" style="left:2191.8px;top:676.1px;width:20px;height:20px;" viewBox="0 0 20 20"><path d="M4.5 10.2L8.3 13.8L15.5 6.5" fill="none" stroke="#fff" stroke-width="2.3"/></svg>
<div class="r" style="left:1209px;top:703.5px;width:1351px;height:1px;background:#e0e0e0;"></div>
<div class="t" style="top:709.60px;font-size:13px;line-height:20px;color:#333;left:1226.80px;">Department ID</div>
<div class="t" style="top:732.40px;font-size:12.2px;line-height:20px;color:#777;left:1226.80px;">36</div>
<div class="t" style="top:709.60px;font-size:13px;line-height:20px;color:#333;left:1548.40px;">Manufacturer</div>
<div class="t" style="top:732.40px;font-size:12.2px;line-height:20px;color:#777;left:1548.40px;">NO DEATALS</div>
<div class="t" style="top:709.60px;font-size:13px;line-height:20px;color:#333;left:1870.60px;">Is Clinic Equipment</div>
<div class="r" style="left:1869.8999999999999px;top:730.2px;width:20px;height:20px;border-radius:3px;border:2px solid #767676;box-sizing:border-box;background:#fff"></div>
<div class="t" style="top:709.60px;font-size:13px;line-height:20px;color:#333;left:2192.50px;">Is Active</div>
<div class="r" style="left:2191.8px;top:730.2px;width:20px;height:20px;border-radius:3px;background:#767676"></div><svg class="i" style="left:2191.8px;top:730.2px;width:20px;height:20px;" viewBox="0 0 20 20"><path d="M4.5 10.2L8.3 13.8L15.5 6.5" fill="none" stroke="#fff" stroke-width="2.3"/></svg>
<div class="r" style="left:1209px;top:757.5px;width:1351px;height:1px;background:#e0e0e0;"></div>
<div class="t" style="top:763.30px;font-size:13px;line-height:20px;color:#333;left:1226.80px;">Invoice ID</div>
<div class="t" style="top:786.20px;font-size:12.2px;line-height:20px;color:#777;left:1226.80px;">0049</div>
<div class="t" style="top:763.30px;font-size:13px;line-height:20px;color:#333;left:1548.40px;">Model</div>
<div class="r" style="left:1209px;top:812px;width:1351px;height:1px;background:#e0e0e0;"></div>
<div class="r" style="left:1209px;top:825px;width:1351px;height:1px;background:#e0e0e0;"></div>
<div class="t" style="top:836.50px;font-size:13px;line-height:20px;color:#333;left:1226.80px;">Comments</div>
<div class="t" style="top:859.30px;font-size:12px;line-height:20px;color:#777;letter-spacing:-0.15px;left:1226.80px;">SALEH CHARGED AMOUNT AS HIS CAPITAL</div>
<div class="r" style="left:1209px;top:907px;width:1351px;height:1px;background:#e0e0e0;"></div>
<div class="r" style="left:1209px;top:920px;width:1351px;height:39.5px;background:#f0f0f0;"></div>
<div class="r" style="left:1209px;top:920px;width:1351px;height:1px;background:#d6d6d6;"></div>
<div class="r" style="left:1209px;top:959.5px;width:1351px;height:1px;background:#e0e0e0;"></div>
<div class="t" style="top:929.30px;font-size:12.1px;line-height:20px;color:#333;letter-spacing:-0.12px;left:1226.90px;">ASSETS DEPRECIATION DETAILS</div>
<svg class="i" style="left:2525px;top:934.3px;width:15px;height:10px;" viewBox="0 0 15 10"><path d="M1.5 8.5L7.5 2.5L13.5 8.5" fill="none" stroke="#9a9a9a" stroke-width="1.8"/></svg>
<div class="t" style="top:965.30px;font-size:13px;line-height:20px;color:#333;left:1226.80px;">Depreciation Methodid</div>
<div class="t" style="top:988.20px;font-size:12.2px;line-height:20px;color:#777;left:1226.80px;">Straight-Line</div>
<div class="t" style="top:965.30px;font-size:13px;line-height:20px;color:#333;left:1548.40px;">Accumulated Depreciation</div>
<div class="t" style="top:988.20px;font-size:12.2px;line-height:20px;color:#777;left:1548.40px;">0</div>
<div class="t" style="top:965.30px;font-size:13px;line-height:20px;color:#333;left:1870.60px;">Is Depreciable</div>
<div class="t" style="top:988.20px;font-size:12.2px;line-height:20px;color:#777;left:1870.60px;">Yes</div>
<div class="r" style="left:1209px;top:1013px;width:1351px;height:1px;background:#e0e0e0;"></div>
<div class="t" style="top:1019.40px;font-size:13px;line-height:20px;color:#333;left:1226.80px;">Useful Life (Years)</div>
<div class="t" style="top:1042.20px;font-size:12.2px;line-height:20px;color:#777;left:1226.80px;">5</div>
<div class="t" style="top:1019.40px;font-size:13px;line-height:20px;color:#333;left:1548.40px;">Last Depreciation Date</div>
<div class="r" style="left:1209px;top:1068px;width:1351px;height:1px;background:#e0e0e0;"></div>
<div class="r" style="left:1209px;top:1081px;width:1351px;height:39px;background:#f0f0f0;"></div>
<div class="r" style="left:1209px;top:1081px;width:1351px;height:1px;background:#d6d6d6;"></div>
<div class="r" style="left:1209px;top:1120px;width:1351px;height:1px;background:#e0e0e0;"></div>
<div class="t" style="top:1090.50px;font-size:12.1px;line-height:20px;color:#333;letter-spacing:-0.12px;left:1226.90px;">AUDIT</div>
<svg class="i" style="left:2525px;top:1095.5px;width:15px;height:10px;" viewBox="0 0 15 10"><path d="M1.5 1.5L7.5 7.5L13.5 1.5" fill="none" stroke="#9a9a9a" stroke-width="1.8"/></svg>
</body></html>
